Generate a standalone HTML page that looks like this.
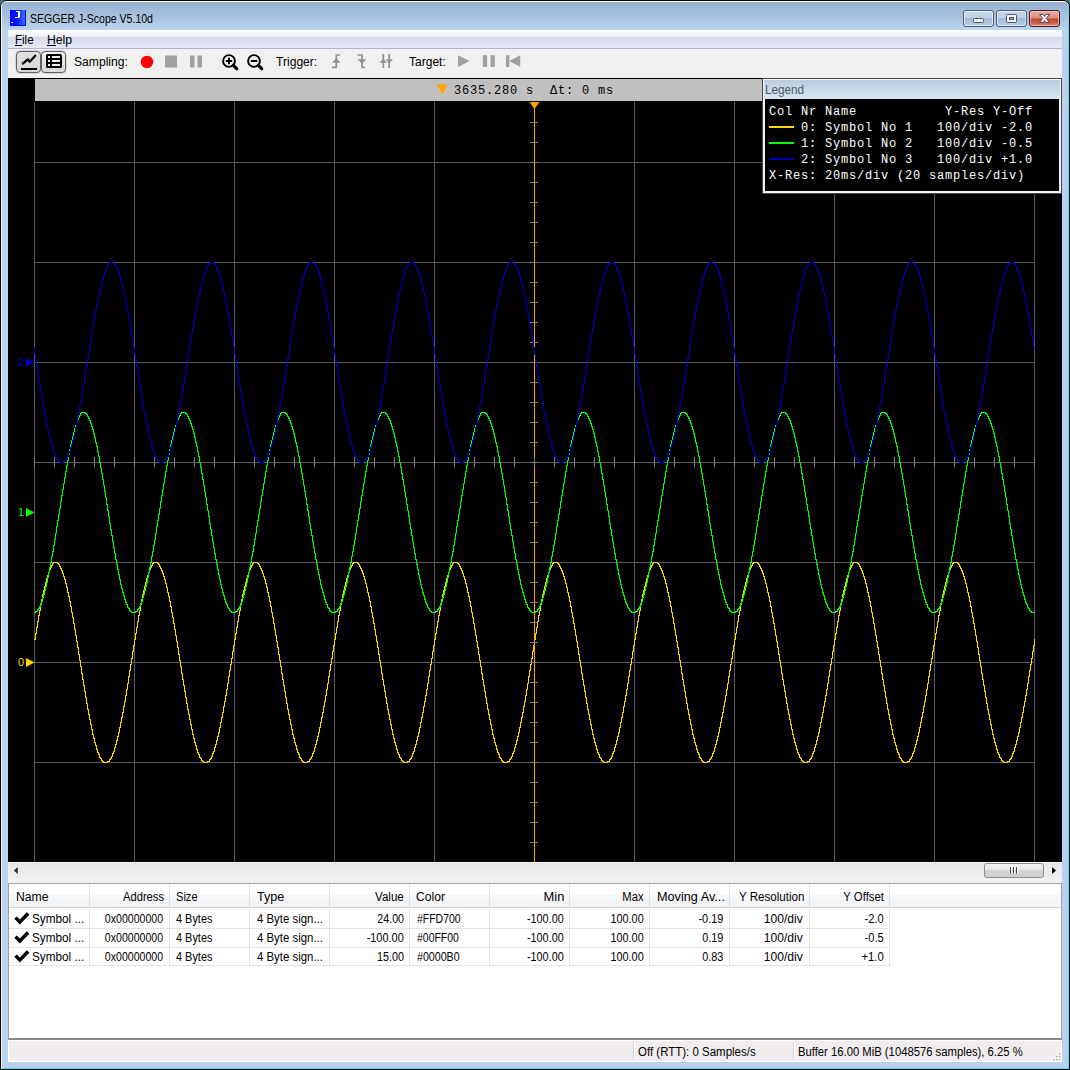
<!DOCTYPE html>
<html><head><meta charset="utf-8"><title>SEGGER J-Scope</title>
<style>
html,body{margin:0;padding:0}
body{width:1070px;height:1070px;position:relative;overflow:hidden;background:#4f6b74;font-family:"Liberation Sans",sans-serif;font-size:12px;color:#000}
div,span,svg{position:absolute;box-sizing:border-box}
.t{white-space:nowrap;line-height:14px;height:14px;transform-origin:0 50%}
.r{transform-origin:100% 50%;text-align:right}
.mono{font-family:"Liberation Mono",monospace}
#win{left:0;top:0;width:1070px;height:1070px;background:#b9d1ea;border-radius:7px 7px 0 0;border:1px solid #000}
#hl{left:1px;top:1px;width:1068px;height:1068px;border-radius:6px 6px 0 0;border-left:1px solid #fff;border-top:1px solid #fff;border-right:1px solid #4fe3ff;border-bottom:1px solid #35dcf5}
#title{left:2px;top:2px;width:1066px;height:28px;border-radius:4px 4px 0 0;background:linear-gradient(#97b3d1 0,#a3bedb 40%,#b3cce7 80%,#bdd6f0 100%)}
.cb{top:10px;height:17px;border:1px solid #4e5b70;border-radius:3px;background:linear-gradient(#c6d7ea 0,#bdd0e6 45%,#a0bad7 50%,#b6cde6 100%);box-shadow:inset 0 0 0 1px rgba(255,255,255,.6)}
#menubar{left:8px;top:30px;width:1054px;height:19px;background:linear-gradient(#ffffff 0,#f7f8fc 18%,#eceef6 38%,#d6daec 39%,#dce0f0 70%,#e4e8f6 100%);border-bottom:1px solid #b0b5c8}
#toolbar{left:8px;top:49px;width:1054px;height:29px;background:#f0f0f0}
.tb{top:51px;height:22px;border:1px solid #606060;border-radius:4px;background:linear-gradient(#f2f2f2,#e2e2e2 50%,#d8d8d8);box-shadow:0 0 0 .5px rgba(96,96,96,.35)}
#plot{left:8px;top:78px;width:1054px;height:784px;background:#000}
#hdr{left:35px;top:79px;width:727px;height:22px;background:#c0c0c0}
#scroll{left:8px;top:862px;width:1054px;height:18px;background:linear-gradient(#ffffff 0,#e5e5e5 7%,#ebebeb 25%,#ededed 85%,#f2f2f2 100%)}
#gap{left:8px;top:880px;width:1054px;height:3px;background:#f0f0f0}
#table{left:8px;top:883px;width:1054px;height:157px;background:#fff;border:1px solid #a0a0a0;border-top-color:#a3a7b2;border-bottom:2px solid #8a8a8a}
#status{left:8px;top:1040px;width:1054px;height:22px;background:#f0edec;border:1px solid #fff}
.hc{top:884px;height:24px;width:80px;background:linear-gradient(#ffffff 0,#ffffff 45%,#f7f8fa 50%,#f1f2f4 100%);border-right:1px solid #e0e3e8;border-bottom:1px solid #d5d5d5}
.vl{width:1px;top:909px;height:57px;background:#e3e3e3}
.hl{left:9px;width:881px;height:1px;background:#e3e3e3}
</style></head><body>
<div id="win"></div><div id="hl"></div>
<div id="title"></div>
<!-- app icon -->
<svg style="left:10px;top:10px" width="16" height="16" viewBox="0 0 16 16"><defs><linearGradient id="ig" x1="0" x2="1" y1="0" y2="0"><stop offset="0" stop-color="#0000f0"/><stop offset=".5" stop-color="#0a20ff"/><stop offset="1" stop-color="#3a80ff"/></linearGradient></defs><rect width="16" height="16" fill="url(#ig)"/><path d="M6 1h4v6l-1 1h-4v-1h3v-5h-2z" fill="#fff"/><path d="M15 0h1v16h-16v-1h15z" fill="#0000ff"/><rect x="1" y="12" width="2" height="1" fill="#fff"/></svg>
<!-- caption buttons -->
<div class="cb" style="left:963px;width:31px"></div>
<div class="cb" style="left:996px;width:31px"></div>
<div class="cb" style="left:1029px;width:31px;border-color:#431422;background:linear-gradient(#e9aa9b 0,#dd8d7c 48%,#c2401f 52%,#c8634b 80%,#d98674 100%);box-shadow:inset 0 0 0 1px rgba(255,220,210,.6)"></div>
<svg style="left:960px;top:8px" width="104" height="22" viewBox="960 8 104 22"><rect x="973.500" y="18.500" width="10" height="4" rx="1" fill="#f4f4f4" stroke="#4b5566" stroke-width="1"/><rect x="1006.500" y="14.500" width="10" height="8" rx="1" fill="#f4f4f4" stroke="#4b5566" stroke-width="1"/><rect x="1009.500" y="17.500" width="4" height="2" fill="#9db8d6" stroke="#4b5566" stroke-width="1"/><path d="M1039.500 14.500h3.600l1.400 1.900l1.400 -1.900h3.600l-3.300 4l3.300 4h-3.600l-1.400 -1.900l-1.400 1.900h-3.600l3.300 -4z" fill="#fff" stroke="#4b4a5e" stroke-width="1" stroke-linejoin="round"/></svg>
<div id="menubar"></div>
<div id="toolbar"></div>
<div class="tb" style="left:16px;width:25px;background:linear-gradient(#e0e0e0,#dcdcdc 50%,#d6d6d6)"></div>
<div class="tb" style="left:41px;width:25px"></div>
<svg style="left:8px;top:49px" width="540" height="29" viewBox="8 49 540 29">
<!-- chart icon -->
<path d="M22.800 63.600l5 -4.300l1.900 2.400l5.600 -6" fill="none" stroke="#000" stroke-width="2.200" stroke-linecap="round" stroke-linejoin="round"/><rect x="21" y="68" width="16" height="2" fill="#000"/>
<!-- list icon -->
<path d="M47.500 54h13q1.500 0 1.500 1.500v11q0 1.500 -1.500 1.500h-13q-1.500 0 -1.500 -1.500v-11q0 -1.500 1.500 -1.500z" fill="#000"/>
<g fill="#f0f0f0"><rect x="48" y="56" width="2" height="2"/><rect x="52" y="56" width="8" height="2"/><rect x="48" y="60" width="2" height="2"/><rect x="52" y="60" width="8" height="2"/><rect x="48" y="64" width="2" height="2"/><rect x="52" y="64" width="8" height="2"/></g>
<!-- sampling -->
<circle cx="147" cy="62" r="6.200" fill="#ff0000"/>
<rect x="165" y="55.500" width="12" height="12" fill="#a0a0a0"/>
<rect x="190" y="55.500" width="4.500" height="12" fill="#a0a0a0"/><rect x="197.500" y="55.500" width="4.500" height="12" fill="#a0a0a0"/>
<!-- zoom in/out -->
<g fill="none" stroke="#000"><circle cx="229" cy="61" r="5.900" stroke-width="1.900"/><path d="M233.300 65.300l3.400 3.400" stroke-width="3.200" stroke-linecap="round"/><path d="M225.800 61h6.400M229 57.800v6.400" stroke-width="2"/>
<circle cx="254" cy="61" r="5.900" stroke-width="1.900"/><path d="M258.300 65.300l3.400 3.400" stroke-width="3.200" stroke-linecap="round"/><path d="M250.800 61h6.400" stroke-width="2"/></g>
<!-- trigger icons -->
<g fill="none" stroke="#909090" stroke-width="1.700"><path d="M332 67.300h4.300v-12.300h3.700"/><path d="M357.500 55h4.500v12.300h3"/><path d="M383.300 54v14M389.200 54v14"/></g>
<g fill="#909090"><path d="M332 62.700l4.300 -4.400l4.300 4.400z"/><path d="M357.700 59.300l4.300 4.400l4.300 -4.400z"/><path d="M379.600 62.700l3.700 -4.200l3.700 4.200z"/><path d="M385.500 59.300l3.700 4.200l3.700 -4.200z"/></g>
<!-- target icons -->
<g fill="#a0a0a0"><path d="M458 55.200l11.600 5.900l-11.600 5.900z"/><rect x="482.800" y="55.200" width="4.300" height="11.800"/><rect x="490.500" y="55.200" width="4.300" height="11.800"/><rect x="506" y="55.200" width="3.300" height="11.800"/><path d="M520.200 55.200l-11 5.900l11 5.900z"/></g>
</svg>
<div id="plot"></div>
<div id="hdr"></div>
<svg style="left:0;top:0" width="1070" height="870" viewBox="0 0 1070 870" shape-rendering="crispEdges">
<g fill="#585858"><rect x="34" y="102" width="1" height="760"/><rect x="134" y="102" width="1" height="760"/><rect x="234" y="102" width="1" height="760"/><rect x="334" y="102" width="1" height="760"/><rect x="434" y="102" width="1" height="760"/><rect x="534" y="102" width="1" height="760"/><rect x="634" y="102" width="1" height="760"/><rect x="734" y="102" width="1" height="760"/><rect x="834" y="102" width="1" height="760"/><rect x="934" y="102" width="1" height="760"/><rect x="1034" y="102" width="1" height="760"/><rect x="34" y="162" width="1001" height="1"/><rect x="34" y="262" width="1001" height="1"/><rect x="34" y="362" width="1001" height="1"/><rect x="34" y="462" width="1001" height="1"/><rect x="34" y="562" width="1001" height="1"/><rect x="34" y="662" width="1001" height="1"/><rect x="34" y="762" width="1001" height="1"/></g>
<path fill="#ffd700" d="M34 639h1v1h-1zM35 633h1v7h-1zM36 627h1v7h-1zM37 621h1v7h-1zM38 615h1v7h-1zM39 610h1v6h-1zM40 604h1v7h-1zM41 599h1v6h-1zM42 594h1v6h-1zM43 590h1v5h-1zM44 586h1v5h-1zM45 582h1v5h-1zM46 578h1v5h-1zM47 575h1v4h-1zM48 572h1v4h-1zM49 569h1v4h-1zM50 567h1v3h-1zM51 565h1v3h-1zM52 563h1v3h-1zM53 562h1v2h-1zM54 562h1v1h-1zM55 562h1v1h-1zM56 562h1v1h-1zM57 562h1v2h-1zM58 563h1v2h-1zM59 564h1v3h-1zM60 566h1v3h-1zM61 568h1v3h-1zM62 570h1v4h-1zM63 573h1v4h-1zM64 576h1v4h-1zM65 579h1v5h-1zM66 583h1v5h-1zM67 587h1v6h-1zM68 592h1v5h-1zM69 596h1v6h-1zM70 601h1v6h-1zM71 606h1v7h-1zM72 612h1v6h-1zM73 617h1v7h-1zM74 623h1v7h-1zM75 629h1v7h-1zM76 635h1v7h-1zM77 641h1v7h-1zM78 647h1v8h-1zM79 654h1v7h-1zM80 660h1v7h-1zM81 666h1v8h-1zM82 673h1v7h-1zM83 679h1v7h-1zM84 685h1v7h-1zM85 691h1v7h-1zM86 697h1v7h-1zM87 703h1v7h-1zM88 709h1v6h-1zM89 714h1v6h-1zM90 719h1v6h-1zM91 724h1v6h-1zM92 729h1v6h-1zM93 734h1v5h-1zM94 738h1v5h-1zM95 742h1v4h-1zM96 745h1v5h-1zM97 749h1v4h-1zM98 752h1v3h-1zM99 754h1v4h-1zM100 757h1v2h-1zM101 758h1v3h-1zM102 760h1v2h-1zM103 761h1v2h-1zM104 762h1v1h-1zM105 762h1v1h-1zM106 762h1v1h-1zM107 761h1v2h-1zM108 761h1v1h-1zM109 759h1v3h-1zM110 758h1v2h-1zM111 756h1v3h-1zM112 753h1v4h-1zM113 751h1v3h-1zM114 747h1v5h-1zM115 744h1v4h-1zM116 740h1v5h-1zM117 736h1v5h-1zM118 732h1v5h-1zM119 727h1v6h-1zM120 722h1v6h-1zM121 717h1v6h-1zM122 712h1v6h-1zM123 706h1v7h-1zM124 701h1v6h-1zM125 695h1v7h-1zM126 689h1v7h-1zM127 683h1v7h-1zM128 676h1v8h-1zM129 670h1v7h-1zM130 664h1v7h-1zM131 658h1v7h-1zM132 651h1v8h-1zM133 645h1v7h-1zM134 639h1v7h-1zM135 633h1v7h-1zM136 627h1v7h-1zM137 621h1v7h-1zM138 615h1v7h-1zM139 610h1v6h-1zM140 604h1v7h-1zM141 599h1v6h-1zM142 594h1v6h-1zM143 590h1v5h-1zM144 586h1v5h-1zM145 582h1v5h-1zM146 578h1v5h-1zM147 575h1v4h-1zM148 572h1v4h-1zM149 569h1v4h-1zM150 567h1v3h-1zM151 565h1v3h-1zM152 563h1v3h-1zM153 562h1v2h-1zM154 562h1v1h-1zM155 562h1v1h-1zM156 562h1v1h-1zM157 562h1v2h-1zM158 563h1v2h-1zM159 564h1v3h-1zM160 566h1v3h-1zM161 568h1v3h-1zM162 570h1v4h-1zM163 573h1v4h-1zM164 576h1v4h-1zM165 579h1v5h-1zM166 583h1v5h-1zM167 587h1v6h-1zM168 592h1v5h-1zM169 596h1v6h-1zM170 601h1v6h-1zM171 606h1v7h-1zM172 612h1v6h-1zM173 617h1v7h-1zM174 623h1v7h-1zM175 629h1v7h-1zM176 635h1v7h-1zM177 641h1v7h-1zM178 647h1v8h-1zM179 654h1v7h-1zM180 660h1v7h-1zM181 666h1v8h-1zM182 673h1v7h-1zM183 679h1v7h-1zM184 685h1v7h-1zM185 691h1v7h-1zM186 697h1v7h-1zM187 703h1v7h-1zM188 709h1v6h-1zM189 714h1v6h-1zM190 719h1v6h-1zM191 724h1v6h-1zM192 729h1v6h-1zM193 734h1v5h-1zM194 738h1v5h-1zM195 742h1v4h-1zM196 745h1v5h-1zM197 749h1v4h-1zM198 752h1v3h-1zM199 754h1v4h-1zM200 757h1v2h-1zM201 758h1v3h-1zM202 760h1v2h-1zM203 761h1v2h-1zM204 762h1v1h-1zM205 762h1v1h-1zM206 762h1v1h-1zM207 761h1v2h-1zM208 761h1v1h-1zM209 759h1v3h-1zM210 758h1v2h-1zM211 756h1v3h-1zM212 753h1v4h-1zM213 751h1v3h-1zM214 747h1v5h-1zM215 744h1v4h-1zM216 740h1v5h-1zM217 736h1v5h-1zM218 732h1v5h-1zM219 727h1v6h-1zM220 722h1v6h-1zM221 717h1v6h-1zM222 712h1v6h-1zM223 706h1v7h-1zM224 701h1v6h-1zM225 695h1v7h-1zM226 689h1v7h-1zM227 683h1v7h-1zM228 676h1v8h-1zM229 670h1v7h-1zM230 664h1v7h-1zM231 658h1v7h-1zM232 651h1v8h-1zM233 645h1v7h-1zM234 639h1v7h-1zM235 633h1v7h-1zM236 627h1v7h-1zM237 621h1v7h-1zM238 615h1v7h-1zM239 610h1v6h-1zM240 604h1v7h-1zM241 599h1v6h-1zM242 594h1v6h-1zM243 590h1v5h-1zM244 586h1v5h-1zM245 582h1v5h-1zM246 578h1v5h-1zM247 575h1v4h-1zM248 572h1v4h-1zM249 569h1v4h-1zM250 567h1v3h-1zM251 565h1v3h-1zM252 563h1v3h-1zM253 562h1v2h-1zM254 562h1v1h-1zM255 562h1v1h-1zM256 562h1v1h-1zM257 562h1v2h-1zM258 563h1v2h-1zM259 564h1v3h-1zM260 566h1v3h-1zM261 568h1v3h-1zM262 570h1v4h-1zM263 573h1v4h-1zM264 576h1v4h-1zM265 579h1v5h-1zM266 583h1v5h-1zM267 587h1v6h-1zM268 592h1v5h-1zM269 596h1v6h-1zM270 601h1v6h-1zM271 606h1v7h-1zM272 612h1v6h-1zM273 617h1v7h-1zM274 623h1v7h-1zM275 629h1v7h-1zM276 635h1v7h-1zM277 641h1v7h-1zM278 647h1v8h-1zM279 654h1v7h-1zM280 660h1v7h-1zM281 666h1v8h-1zM282 673h1v7h-1zM283 679h1v7h-1zM284 685h1v7h-1zM285 691h1v7h-1zM286 697h1v7h-1zM287 703h1v7h-1zM288 709h1v6h-1zM289 714h1v6h-1zM290 719h1v6h-1zM291 724h1v6h-1zM292 729h1v6h-1zM293 734h1v5h-1zM294 738h1v5h-1zM295 742h1v4h-1zM296 745h1v5h-1zM297 749h1v4h-1zM298 752h1v3h-1zM299 754h1v4h-1zM300 757h1v2h-1zM301 758h1v3h-1zM302 760h1v2h-1zM303 761h1v2h-1zM304 762h1v1h-1zM305 762h1v1h-1zM306 762h1v1h-1zM307 761h1v2h-1zM308 761h1v1h-1zM309 759h1v3h-1zM310 758h1v2h-1zM311 756h1v3h-1zM312 753h1v4h-1zM313 751h1v3h-1zM314 747h1v5h-1zM315 744h1v4h-1zM316 740h1v5h-1zM317 736h1v5h-1zM318 732h1v5h-1zM319 727h1v6h-1zM320 722h1v6h-1zM321 717h1v6h-1zM322 712h1v6h-1zM323 706h1v7h-1zM324 701h1v6h-1zM325 695h1v7h-1zM326 689h1v7h-1zM327 683h1v7h-1zM328 676h1v8h-1zM329 670h1v7h-1zM330 664h1v7h-1zM331 658h1v7h-1zM332 651h1v8h-1zM333 645h1v7h-1zM334 639h1v7h-1zM335 633h1v7h-1zM336 627h1v7h-1zM337 621h1v7h-1zM338 615h1v7h-1zM339 610h1v6h-1zM340 604h1v7h-1zM341 599h1v6h-1zM342 594h1v6h-1zM343 590h1v5h-1zM344 586h1v5h-1zM345 582h1v5h-1zM346 578h1v5h-1zM347 575h1v4h-1zM348 572h1v4h-1zM349 569h1v4h-1zM350 567h1v3h-1zM351 565h1v3h-1zM352 563h1v3h-1zM353 562h1v2h-1zM354 562h1v1h-1zM355 562h1v1h-1zM356 562h1v1h-1zM357 562h1v2h-1zM358 563h1v2h-1zM359 564h1v3h-1zM360 566h1v3h-1zM361 568h1v3h-1zM362 570h1v4h-1zM363 573h1v4h-1zM364 576h1v4h-1zM365 579h1v5h-1zM366 583h1v5h-1zM367 587h1v6h-1zM368 592h1v5h-1zM369 596h1v6h-1zM370 601h1v6h-1zM371 606h1v7h-1zM372 612h1v6h-1zM373 617h1v7h-1zM374 623h1v7h-1zM375 629h1v7h-1zM376 635h1v7h-1zM377 641h1v7h-1zM378 647h1v8h-1zM379 654h1v7h-1zM380 660h1v7h-1zM381 666h1v8h-1zM382 673h1v7h-1zM383 679h1v7h-1zM384 685h1v7h-1zM385 691h1v7h-1zM386 697h1v7h-1zM387 703h1v7h-1zM388 709h1v6h-1zM389 714h1v6h-1zM390 719h1v6h-1zM391 724h1v6h-1zM392 729h1v6h-1zM393 734h1v5h-1zM394 738h1v5h-1zM395 742h1v4h-1zM396 745h1v5h-1zM397 749h1v4h-1zM398 752h1v3h-1zM399 754h1v4h-1zM400 757h1v2h-1zM401 758h1v3h-1zM402 760h1v2h-1zM403 761h1v2h-1zM404 762h1v1h-1zM405 762h1v1h-1zM406 762h1v1h-1zM407 761h1v2h-1zM408 761h1v1h-1zM409 759h1v3h-1zM410 758h1v2h-1zM411 756h1v3h-1zM412 753h1v4h-1zM413 751h1v3h-1zM414 747h1v5h-1zM415 744h1v4h-1zM416 740h1v5h-1zM417 736h1v5h-1zM418 732h1v5h-1zM419 727h1v6h-1zM420 722h1v6h-1zM421 717h1v6h-1zM422 712h1v6h-1zM423 706h1v7h-1zM424 701h1v6h-1zM425 695h1v7h-1zM426 689h1v7h-1zM427 683h1v7h-1zM428 676h1v8h-1zM429 670h1v7h-1zM430 664h1v7h-1zM431 658h1v7h-1zM432 651h1v8h-1zM433 645h1v7h-1zM434 639h1v7h-1zM435 633h1v7h-1zM436 627h1v7h-1zM437 621h1v7h-1zM438 615h1v7h-1zM439 610h1v6h-1zM440 604h1v7h-1zM441 599h1v6h-1zM442 594h1v6h-1zM443 590h1v5h-1zM444 586h1v5h-1zM445 582h1v5h-1zM446 578h1v5h-1zM447 575h1v4h-1zM448 572h1v4h-1zM449 569h1v4h-1zM450 567h1v3h-1zM451 565h1v3h-1zM452 563h1v3h-1zM453 562h1v2h-1zM454 562h1v1h-1zM455 562h1v1h-1zM456 562h1v1h-1zM457 562h1v2h-1zM458 563h1v2h-1zM459 564h1v3h-1zM460 566h1v3h-1zM461 568h1v3h-1zM462 570h1v4h-1zM463 573h1v4h-1zM464 576h1v4h-1zM465 579h1v5h-1zM466 583h1v5h-1zM467 587h1v6h-1zM468 592h1v5h-1zM469 596h1v6h-1zM470 601h1v6h-1zM471 606h1v7h-1zM472 612h1v6h-1zM473 617h1v7h-1zM474 623h1v7h-1zM475 629h1v7h-1zM476 635h1v7h-1zM477 641h1v7h-1zM478 647h1v8h-1zM479 654h1v7h-1zM480 660h1v7h-1zM481 666h1v8h-1zM482 673h1v7h-1zM483 679h1v7h-1zM484 685h1v7h-1zM485 691h1v7h-1zM486 697h1v7h-1zM487 703h1v7h-1zM488 709h1v6h-1zM489 714h1v6h-1zM490 719h1v6h-1zM491 724h1v6h-1zM492 729h1v6h-1zM493 734h1v5h-1zM494 738h1v5h-1zM495 742h1v4h-1zM496 745h1v5h-1zM497 749h1v4h-1zM498 752h1v3h-1zM499 754h1v4h-1zM500 757h1v2h-1zM501 758h1v3h-1zM502 760h1v2h-1zM503 761h1v2h-1zM504 762h1v1h-1zM505 762h1v1h-1zM506 762h1v1h-1zM507 761h1v2h-1zM508 761h1v1h-1zM509 759h1v3h-1zM510 758h1v2h-1zM511 756h1v3h-1zM512 753h1v4h-1zM513 751h1v3h-1zM514 747h1v5h-1zM515 744h1v4h-1zM516 740h1v5h-1zM517 736h1v5h-1zM518 732h1v5h-1zM519 727h1v6h-1zM520 722h1v6h-1zM521 717h1v6h-1zM522 712h1v6h-1zM523 706h1v7h-1zM524 701h1v6h-1zM525 695h1v7h-1zM526 689h1v7h-1zM527 683h1v7h-1zM528 676h1v8h-1zM529 670h1v7h-1zM530 664h1v7h-1zM531 658h1v7h-1zM532 651h1v8h-1zM533 645h1v7h-1zM534 639h1v7h-1zM535 633h1v7h-1zM536 627h1v7h-1zM537 621h1v7h-1zM538 615h1v7h-1zM539 610h1v6h-1zM540 604h1v7h-1zM541 599h1v6h-1zM542 594h1v6h-1zM543 590h1v5h-1zM544 586h1v5h-1zM545 582h1v5h-1zM546 578h1v5h-1zM547 575h1v4h-1zM548 572h1v4h-1zM549 569h1v4h-1zM550 567h1v3h-1zM551 565h1v3h-1zM552 563h1v3h-1zM553 562h1v2h-1zM554 562h1v1h-1zM555 562h1v1h-1zM556 562h1v1h-1zM557 562h1v2h-1zM558 563h1v2h-1zM559 564h1v3h-1zM560 566h1v3h-1zM561 568h1v3h-1zM562 570h1v4h-1zM563 573h1v4h-1zM564 576h1v4h-1zM565 579h1v5h-1zM566 583h1v5h-1zM567 587h1v6h-1zM568 592h1v5h-1zM569 596h1v6h-1zM570 601h1v6h-1zM571 606h1v7h-1zM572 612h1v6h-1zM573 617h1v7h-1zM574 623h1v7h-1zM575 629h1v7h-1zM576 635h1v7h-1zM577 641h1v7h-1zM578 647h1v8h-1zM579 654h1v7h-1zM580 660h1v7h-1zM581 666h1v8h-1zM582 673h1v7h-1zM583 679h1v7h-1zM584 685h1v7h-1zM585 691h1v7h-1zM586 697h1v7h-1zM587 703h1v7h-1zM588 709h1v6h-1zM589 714h1v6h-1zM590 719h1v6h-1zM591 724h1v6h-1zM592 729h1v6h-1zM593 734h1v5h-1zM594 738h1v5h-1zM595 742h1v4h-1zM596 745h1v5h-1zM597 749h1v4h-1zM598 752h1v3h-1zM599 754h1v4h-1zM600 757h1v2h-1zM601 758h1v3h-1zM602 760h1v2h-1zM603 761h1v2h-1zM604 762h1v1h-1zM605 762h1v1h-1zM606 762h1v1h-1zM607 761h1v2h-1zM608 761h1v1h-1zM609 759h1v3h-1zM610 758h1v2h-1zM611 756h1v3h-1zM612 753h1v4h-1zM613 751h1v3h-1zM614 747h1v5h-1zM615 744h1v4h-1zM616 740h1v5h-1zM617 736h1v5h-1zM618 732h1v5h-1zM619 727h1v6h-1zM620 722h1v6h-1zM621 717h1v6h-1zM622 712h1v6h-1zM623 706h1v7h-1zM624 701h1v6h-1zM625 695h1v7h-1zM626 689h1v7h-1zM627 683h1v7h-1zM628 676h1v8h-1zM629 670h1v7h-1zM630 664h1v7h-1zM631 658h1v7h-1zM632 651h1v8h-1zM633 645h1v7h-1zM634 639h1v7h-1zM635 633h1v7h-1zM636 627h1v7h-1zM637 621h1v7h-1zM638 615h1v7h-1zM639 610h1v6h-1zM640 604h1v7h-1zM641 599h1v6h-1zM642 594h1v6h-1zM643 590h1v5h-1zM644 586h1v5h-1zM645 582h1v5h-1zM646 578h1v5h-1zM647 575h1v4h-1zM648 572h1v4h-1zM649 569h1v4h-1zM650 567h1v3h-1zM651 565h1v3h-1zM652 563h1v3h-1zM653 562h1v2h-1zM654 562h1v1h-1zM655 562h1v1h-1zM656 562h1v1h-1zM657 562h1v2h-1zM658 563h1v2h-1zM659 564h1v3h-1zM660 566h1v3h-1zM661 568h1v3h-1zM662 570h1v4h-1zM663 573h1v4h-1zM664 576h1v4h-1zM665 579h1v5h-1zM666 583h1v5h-1zM667 587h1v6h-1zM668 592h1v5h-1zM669 596h1v6h-1zM670 601h1v6h-1zM671 606h1v7h-1zM672 612h1v6h-1zM673 617h1v7h-1zM674 623h1v7h-1zM675 629h1v7h-1zM676 635h1v7h-1zM677 641h1v7h-1zM678 647h1v8h-1zM679 654h1v7h-1zM680 660h1v7h-1zM681 666h1v8h-1zM682 673h1v7h-1zM683 679h1v7h-1zM684 685h1v7h-1zM685 691h1v7h-1zM686 697h1v7h-1zM687 703h1v7h-1zM688 709h1v6h-1zM689 714h1v6h-1zM690 719h1v6h-1zM691 724h1v6h-1zM692 729h1v6h-1zM693 734h1v5h-1zM694 738h1v5h-1zM695 742h1v4h-1zM696 745h1v5h-1zM697 749h1v4h-1zM698 752h1v3h-1zM699 754h1v4h-1zM700 757h1v2h-1zM701 758h1v3h-1zM702 760h1v2h-1zM703 761h1v2h-1zM704 762h1v1h-1zM705 762h1v1h-1zM706 762h1v1h-1zM707 761h1v2h-1zM708 761h1v1h-1zM709 759h1v3h-1zM710 758h1v2h-1zM711 756h1v3h-1zM712 753h1v4h-1zM713 751h1v3h-1zM714 747h1v5h-1zM715 744h1v4h-1zM716 740h1v5h-1zM717 736h1v5h-1zM718 732h1v5h-1zM719 727h1v6h-1zM720 722h1v6h-1zM721 717h1v6h-1zM722 712h1v6h-1zM723 706h1v7h-1zM724 701h1v6h-1zM725 695h1v7h-1zM726 689h1v7h-1zM727 683h1v7h-1zM728 676h1v8h-1zM729 670h1v7h-1zM730 664h1v7h-1zM731 658h1v7h-1zM732 651h1v8h-1zM733 645h1v7h-1zM734 639h1v7h-1zM735 633h1v7h-1zM736 627h1v7h-1zM737 621h1v7h-1zM738 615h1v7h-1zM739 610h1v6h-1zM740 604h1v7h-1zM741 599h1v6h-1zM742 594h1v6h-1zM743 590h1v5h-1zM744 586h1v5h-1zM745 582h1v5h-1zM746 578h1v5h-1zM747 575h1v4h-1zM748 572h1v4h-1zM749 569h1v4h-1zM750 567h1v3h-1zM751 565h1v3h-1zM752 563h1v3h-1zM753 562h1v2h-1zM754 562h1v1h-1zM755 562h1v1h-1zM756 562h1v1h-1zM757 562h1v2h-1zM758 563h1v2h-1zM759 564h1v3h-1zM760 566h1v3h-1zM761 568h1v3h-1zM762 570h1v4h-1zM763 573h1v4h-1zM764 576h1v4h-1zM765 579h1v5h-1zM766 583h1v5h-1zM767 587h1v6h-1zM768 592h1v5h-1zM769 596h1v6h-1zM770 601h1v6h-1zM771 606h1v7h-1zM772 612h1v6h-1zM773 617h1v7h-1zM774 623h1v7h-1zM775 629h1v7h-1zM776 635h1v7h-1zM777 641h1v7h-1zM778 647h1v8h-1zM779 654h1v7h-1zM780 660h1v7h-1zM781 666h1v8h-1zM782 673h1v7h-1zM783 679h1v7h-1zM784 685h1v7h-1zM785 691h1v7h-1zM786 697h1v7h-1zM787 703h1v7h-1zM788 709h1v6h-1zM789 714h1v6h-1zM790 719h1v6h-1zM791 724h1v6h-1zM792 729h1v6h-1zM793 734h1v5h-1zM794 738h1v5h-1zM795 742h1v4h-1zM796 745h1v5h-1zM797 749h1v4h-1zM798 752h1v3h-1zM799 754h1v4h-1zM800 757h1v2h-1zM801 758h1v3h-1zM802 760h1v2h-1zM803 761h1v2h-1zM804 762h1v1h-1zM805 762h1v1h-1zM806 762h1v1h-1zM807 761h1v2h-1zM808 761h1v1h-1zM809 759h1v3h-1zM810 758h1v2h-1zM811 756h1v3h-1zM812 753h1v4h-1zM813 751h1v3h-1zM814 747h1v5h-1zM815 744h1v4h-1zM816 740h1v5h-1zM817 736h1v5h-1zM818 732h1v5h-1zM819 727h1v6h-1zM820 722h1v6h-1zM821 717h1v6h-1zM822 712h1v6h-1zM823 706h1v7h-1zM824 701h1v6h-1zM825 695h1v7h-1zM826 689h1v7h-1zM827 683h1v7h-1zM828 676h1v8h-1zM829 670h1v7h-1zM830 664h1v7h-1zM831 658h1v7h-1zM832 651h1v8h-1zM833 645h1v7h-1zM834 639h1v7h-1zM835 633h1v7h-1zM836 627h1v7h-1zM837 621h1v7h-1zM838 615h1v7h-1zM839 610h1v6h-1zM840 604h1v7h-1zM841 599h1v6h-1zM842 594h1v6h-1zM843 590h1v5h-1zM844 586h1v5h-1zM845 582h1v5h-1zM846 578h1v5h-1zM847 575h1v4h-1zM848 572h1v4h-1zM849 569h1v4h-1zM850 567h1v3h-1zM851 565h1v3h-1zM852 563h1v3h-1zM853 562h1v2h-1zM854 562h1v1h-1zM855 562h1v1h-1zM856 562h1v1h-1zM857 562h1v2h-1zM858 563h1v2h-1zM859 564h1v3h-1zM860 566h1v3h-1zM861 568h1v3h-1zM862 570h1v4h-1zM863 573h1v4h-1zM864 576h1v4h-1zM865 579h1v5h-1zM866 583h1v5h-1zM867 587h1v6h-1zM868 592h1v5h-1zM869 596h1v6h-1zM870 601h1v6h-1zM871 606h1v7h-1zM872 612h1v6h-1zM873 617h1v7h-1zM874 623h1v7h-1zM875 629h1v7h-1zM876 635h1v7h-1zM877 641h1v7h-1zM878 647h1v8h-1zM879 654h1v7h-1zM880 660h1v7h-1zM881 666h1v8h-1zM882 673h1v7h-1zM883 679h1v7h-1zM884 685h1v7h-1zM885 691h1v7h-1zM886 697h1v7h-1zM887 703h1v7h-1zM888 709h1v6h-1zM889 714h1v6h-1zM890 719h1v6h-1zM891 724h1v6h-1zM892 729h1v6h-1zM893 734h1v5h-1zM894 738h1v5h-1zM895 742h1v4h-1zM896 745h1v5h-1zM897 749h1v4h-1zM898 752h1v3h-1zM899 754h1v4h-1zM900 757h1v2h-1zM901 758h1v3h-1zM902 760h1v2h-1zM903 761h1v2h-1zM904 762h1v1h-1zM905 762h1v1h-1zM906 762h1v1h-1zM907 761h1v2h-1zM908 761h1v1h-1zM909 759h1v3h-1zM910 758h1v2h-1zM911 756h1v3h-1zM912 753h1v4h-1zM913 751h1v3h-1zM914 747h1v5h-1zM915 744h1v4h-1zM916 740h1v5h-1zM917 736h1v5h-1zM918 732h1v5h-1zM919 727h1v6h-1zM920 722h1v6h-1zM921 717h1v6h-1zM922 712h1v6h-1zM923 706h1v7h-1zM924 701h1v6h-1zM925 695h1v7h-1zM926 689h1v7h-1zM927 683h1v7h-1zM928 676h1v8h-1zM929 670h1v7h-1zM930 664h1v7h-1zM931 658h1v7h-1zM932 651h1v8h-1zM933 645h1v7h-1zM934 639h1v7h-1zM935 633h1v7h-1zM936 627h1v7h-1zM937 621h1v7h-1zM938 615h1v7h-1zM939 610h1v6h-1zM940 604h1v7h-1zM941 599h1v6h-1zM942 594h1v6h-1zM943 590h1v5h-1zM944 586h1v5h-1zM945 582h1v5h-1zM946 578h1v5h-1zM947 575h1v4h-1zM948 572h1v4h-1zM949 569h1v4h-1zM950 567h1v3h-1zM951 565h1v3h-1zM952 563h1v3h-1zM953 562h1v2h-1zM954 562h1v1h-1zM955 562h1v1h-1zM956 562h1v1h-1zM957 562h1v2h-1zM958 563h1v2h-1zM959 564h1v3h-1zM960 566h1v3h-1zM961 568h1v3h-1zM962 570h1v4h-1zM963 573h1v4h-1zM964 576h1v4h-1zM965 579h1v5h-1zM966 583h1v5h-1zM967 587h1v6h-1zM968 592h1v5h-1zM969 596h1v6h-1zM970 601h1v6h-1zM971 606h1v7h-1zM972 612h1v6h-1zM973 617h1v7h-1zM974 623h1v7h-1zM975 629h1v7h-1zM976 635h1v7h-1zM977 641h1v7h-1zM978 647h1v8h-1zM979 654h1v7h-1zM980 660h1v7h-1zM981 666h1v8h-1zM982 673h1v7h-1zM983 679h1v7h-1zM984 685h1v7h-1zM985 691h1v7h-1zM986 697h1v7h-1zM987 703h1v7h-1zM988 709h1v6h-1zM989 714h1v6h-1zM990 719h1v6h-1zM991 724h1v6h-1zM992 729h1v6h-1zM993 734h1v5h-1zM994 738h1v5h-1zM995 742h1v4h-1zM996 745h1v5h-1zM997 749h1v4h-1zM998 752h1v3h-1zM999 754h1v4h-1zM1000 757h1v2h-1zM1001 758h1v3h-1zM1002 760h1v2h-1zM1003 761h1v2h-1zM1004 762h1v1h-1zM1005 762h1v1h-1zM1006 762h1v1h-1zM1007 761h1v2h-1zM1008 761h1v1h-1zM1009 759h1v3h-1zM1010 758h1v2h-1zM1011 756h1v3h-1zM1012 753h1v4h-1zM1013 751h1v3h-1zM1014 747h1v5h-1zM1015 744h1v4h-1zM1016 740h1v5h-1zM1017 736h1v5h-1zM1018 732h1v5h-1zM1019 727h1v6h-1zM1020 722h1v6h-1zM1021 717h1v6h-1zM1022 712h1v6h-1zM1023 706h1v7h-1zM1024 701h1v6h-1zM1025 695h1v7h-1zM1026 689h1v7h-1zM1027 683h1v7h-1zM1028 676h1v8h-1zM1029 670h1v7h-1zM1030 664h1v7h-1zM1031 658h1v7h-1zM1032 651h1v8h-1zM1033 645h1v7h-1zM1034 639h1v7h-1z"/>
<path fill="#00ff00" d="M34 612h1v1h-1zM35 611h1v2h-1zM36 611h1v1h-1zM37 609h1v3h-1zM38 608h1v2h-1zM39 606h1v3h-1zM40 603h1v4h-1zM41 601h1v3h-1zM42 597h1v5h-1zM43 594h1v4h-1zM44 590h1v5h-1zM45 586h1v5h-1zM46 582h1v5h-1zM47 577h1v6h-1zM48 572h1v6h-1zM49 567h1v6h-1zM50 562h1v6h-1zM51 556h1v7h-1zM52 551h1v6h-1zM53 545h1v7h-1zM54 539h1v7h-1zM55 533h1v7h-1zM56 526h1v8h-1zM57 520h1v7h-1zM58 514h1v7h-1zM59 508h1v7h-1zM60 501h1v8h-1zM61 495h1v7h-1zM62 489h1v7h-1zM63 483h1v7h-1zM64 477h1v7h-1zM65 471h1v7h-1zM66 465h1v7h-1zM67 460h1v6h-1zM68 454h1v7h-1zM69 449h1v6h-1zM70 444h1v6h-1zM71 440h1v5h-1zM72 436h1v5h-1zM73 432h1v5h-1zM74 428h1v5h-1zM75 425h1v4h-1zM76 422h1v4h-1zM77 419h1v4h-1zM78 417h1v3h-1zM79 415h1v3h-1zM80 413h1v3h-1zM81 412h1v2h-1zM82 412h1v1h-1zM83 412h1v1h-1zM84 412h1v1h-1zM85 412h1v2h-1zM86 413h1v2h-1zM87 414h1v3h-1zM88 416h1v3h-1zM89 418h1v3h-1zM90 420h1v4h-1zM91 423h1v4h-1zM92 426h1v4h-1zM93 429h1v5h-1zM94 433h1v5h-1zM95 437h1v6h-1zM96 442h1v5h-1zM97 446h1v6h-1zM98 451h1v6h-1zM99 456h1v7h-1zM100 462h1v6h-1zM101 467h1v7h-1zM102 473h1v7h-1zM103 479h1v7h-1zM104 485h1v7h-1zM105 491h1v7h-1zM106 497h1v8h-1zM107 504h1v7h-1zM108 510h1v7h-1zM109 516h1v8h-1zM110 523h1v7h-1zM111 529h1v7h-1zM112 535h1v7h-1zM113 541h1v7h-1zM114 547h1v7h-1zM115 553h1v7h-1zM116 559h1v6h-1zM117 564h1v6h-1zM118 569h1v6h-1zM119 574h1v6h-1zM120 579h1v6h-1zM121 584h1v5h-1zM122 588h1v5h-1zM123 592h1v4h-1zM124 595h1v5h-1zM125 599h1v4h-1zM126 602h1v3h-1zM127 604h1v4h-1zM128 607h1v2h-1zM129 608h1v3h-1zM130 610h1v2h-1zM131 611h1v2h-1zM132 612h1v1h-1zM133 612h1v1h-1zM134 612h1v1h-1zM135 611h1v2h-1zM136 611h1v1h-1zM137 609h1v3h-1zM138 608h1v2h-1zM139 606h1v3h-1zM140 603h1v4h-1zM141 601h1v3h-1zM142 597h1v5h-1zM143 594h1v4h-1zM144 590h1v5h-1zM145 586h1v5h-1zM146 582h1v5h-1zM147 577h1v6h-1zM148 572h1v6h-1zM149 567h1v6h-1zM150 562h1v6h-1zM151 556h1v7h-1zM152 551h1v6h-1zM153 545h1v7h-1zM154 539h1v7h-1zM155 533h1v7h-1zM156 526h1v8h-1zM157 520h1v7h-1zM158 514h1v7h-1zM159 508h1v7h-1zM160 501h1v8h-1zM161 495h1v7h-1zM162 489h1v7h-1zM163 483h1v7h-1zM164 477h1v7h-1zM165 471h1v7h-1zM166 465h1v7h-1zM167 460h1v6h-1zM168 454h1v7h-1zM169 449h1v6h-1zM170 444h1v6h-1zM171 440h1v5h-1zM172 436h1v5h-1zM173 432h1v5h-1zM174 428h1v5h-1zM175 425h1v4h-1zM176 422h1v4h-1zM177 419h1v4h-1zM178 417h1v3h-1zM179 415h1v3h-1zM180 413h1v3h-1zM181 412h1v2h-1zM182 412h1v1h-1zM183 412h1v1h-1zM184 412h1v1h-1zM185 412h1v2h-1zM186 413h1v2h-1zM187 414h1v3h-1zM188 416h1v3h-1zM189 418h1v3h-1zM190 420h1v4h-1zM191 423h1v4h-1zM192 426h1v4h-1zM193 429h1v5h-1zM194 433h1v5h-1zM195 437h1v6h-1zM196 442h1v5h-1zM197 446h1v6h-1zM198 451h1v6h-1zM199 456h1v7h-1zM200 462h1v6h-1zM201 467h1v7h-1zM202 473h1v7h-1zM203 479h1v7h-1zM204 485h1v7h-1zM205 491h1v7h-1zM206 497h1v8h-1zM207 504h1v7h-1zM208 510h1v7h-1zM209 516h1v8h-1zM210 523h1v7h-1zM211 529h1v7h-1zM212 535h1v7h-1zM213 541h1v7h-1zM214 547h1v7h-1zM215 553h1v7h-1zM216 559h1v6h-1zM217 564h1v6h-1zM218 569h1v6h-1zM219 574h1v6h-1zM220 579h1v6h-1zM221 584h1v5h-1zM222 588h1v5h-1zM223 592h1v4h-1zM224 595h1v5h-1zM225 599h1v4h-1zM226 602h1v3h-1zM227 604h1v4h-1zM228 607h1v2h-1zM229 608h1v3h-1zM230 610h1v2h-1zM231 611h1v2h-1zM232 612h1v1h-1zM233 612h1v1h-1zM234 612h1v1h-1zM235 611h1v2h-1zM236 611h1v1h-1zM237 609h1v3h-1zM238 608h1v2h-1zM239 606h1v3h-1zM240 603h1v4h-1zM241 601h1v3h-1zM242 597h1v5h-1zM243 594h1v4h-1zM244 590h1v5h-1zM245 586h1v5h-1zM246 582h1v5h-1zM247 577h1v6h-1zM248 572h1v6h-1zM249 567h1v6h-1zM250 562h1v6h-1zM251 556h1v7h-1zM252 551h1v6h-1zM253 545h1v7h-1zM254 539h1v7h-1zM255 533h1v7h-1zM256 526h1v8h-1zM257 520h1v7h-1zM258 514h1v7h-1zM259 508h1v7h-1zM260 501h1v8h-1zM261 495h1v7h-1zM262 489h1v7h-1zM263 483h1v7h-1zM264 477h1v7h-1zM265 471h1v7h-1zM266 465h1v7h-1zM267 460h1v6h-1zM268 454h1v7h-1zM269 449h1v6h-1zM270 444h1v6h-1zM271 440h1v5h-1zM272 436h1v5h-1zM273 432h1v5h-1zM274 428h1v5h-1zM275 425h1v4h-1zM276 422h1v4h-1zM277 419h1v4h-1zM278 417h1v3h-1zM279 415h1v3h-1zM280 413h1v3h-1zM281 412h1v2h-1zM282 412h1v1h-1zM283 412h1v1h-1zM284 412h1v1h-1zM285 412h1v2h-1zM286 413h1v2h-1zM287 414h1v3h-1zM288 416h1v3h-1zM289 418h1v3h-1zM290 420h1v4h-1zM291 423h1v4h-1zM292 426h1v4h-1zM293 429h1v5h-1zM294 433h1v5h-1zM295 437h1v6h-1zM296 442h1v5h-1zM297 446h1v6h-1zM298 451h1v6h-1zM299 456h1v7h-1zM300 462h1v6h-1zM301 467h1v7h-1zM302 473h1v7h-1zM303 479h1v7h-1zM304 485h1v7h-1zM305 491h1v7h-1zM306 497h1v8h-1zM307 504h1v7h-1zM308 510h1v7h-1zM309 516h1v8h-1zM310 523h1v7h-1zM311 529h1v7h-1zM312 535h1v7h-1zM313 541h1v7h-1zM314 547h1v7h-1zM315 553h1v7h-1zM316 559h1v6h-1zM317 564h1v6h-1zM318 569h1v6h-1zM319 574h1v6h-1zM320 579h1v6h-1zM321 584h1v5h-1zM322 588h1v5h-1zM323 592h1v4h-1zM324 595h1v5h-1zM325 599h1v4h-1zM326 602h1v3h-1zM327 604h1v4h-1zM328 607h1v2h-1zM329 608h1v3h-1zM330 610h1v2h-1zM331 611h1v2h-1zM332 612h1v1h-1zM333 612h1v1h-1zM334 612h1v1h-1zM335 611h1v2h-1zM336 611h1v1h-1zM337 609h1v3h-1zM338 608h1v2h-1zM339 606h1v3h-1zM340 603h1v4h-1zM341 601h1v3h-1zM342 597h1v5h-1zM343 594h1v4h-1zM344 590h1v5h-1zM345 586h1v5h-1zM346 582h1v5h-1zM347 577h1v6h-1zM348 572h1v6h-1zM349 567h1v6h-1zM350 562h1v6h-1zM351 556h1v7h-1zM352 551h1v6h-1zM353 545h1v7h-1zM354 539h1v7h-1zM355 533h1v7h-1zM356 526h1v8h-1zM357 520h1v7h-1zM358 514h1v7h-1zM359 508h1v7h-1zM360 501h1v8h-1zM361 495h1v7h-1zM362 489h1v7h-1zM363 483h1v7h-1zM364 477h1v7h-1zM365 471h1v7h-1zM366 465h1v7h-1zM367 460h1v6h-1zM368 454h1v7h-1zM369 449h1v6h-1zM370 444h1v6h-1zM371 440h1v5h-1zM372 436h1v5h-1zM373 432h1v5h-1zM374 428h1v5h-1zM375 425h1v4h-1zM376 422h1v4h-1zM377 419h1v4h-1zM378 417h1v3h-1zM379 415h1v3h-1zM380 413h1v3h-1zM381 412h1v2h-1zM382 412h1v1h-1zM383 412h1v1h-1zM384 412h1v1h-1zM385 412h1v2h-1zM386 413h1v2h-1zM387 414h1v3h-1zM388 416h1v3h-1zM389 418h1v3h-1zM390 420h1v4h-1zM391 423h1v4h-1zM392 426h1v4h-1zM393 429h1v5h-1zM394 433h1v5h-1zM395 437h1v6h-1zM396 442h1v5h-1zM397 446h1v6h-1zM398 451h1v6h-1zM399 456h1v7h-1zM400 462h1v6h-1zM401 467h1v7h-1zM402 473h1v7h-1zM403 479h1v7h-1zM404 485h1v7h-1zM405 491h1v7h-1zM406 497h1v8h-1zM407 504h1v7h-1zM408 510h1v7h-1zM409 516h1v8h-1zM410 523h1v7h-1zM411 529h1v7h-1zM412 535h1v7h-1zM413 541h1v7h-1zM414 547h1v7h-1zM415 553h1v7h-1zM416 559h1v6h-1zM417 564h1v6h-1zM418 569h1v6h-1zM419 574h1v6h-1zM420 579h1v6h-1zM421 584h1v5h-1zM422 588h1v5h-1zM423 592h1v4h-1zM424 595h1v5h-1zM425 599h1v4h-1zM426 602h1v3h-1zM427 604h1v4h-1zM428 607h1v2h-1zM429 608h1v3h-1zM430 610h1v2h-1zM431 611h1v2h-1zM432 612h1v1h-1zM433 612h1v1h-1zM434 612h1v1h-1zM435 611h1v2h-1zM436 611h1v1h-1zM437 609h1v3h-1zM438 608h1v2h-1zM439 606h1v3h-1zM440 603h1v4h-1zM441 601h1v3h-1zM442 597h1v5h-1zM443 594h1v4h-1zM444 590h1v5h-1zM445 586h1v5h-1zM446 582h1v5h-1zM447 577h1v6h-1zM448 572h1v6h-1zM449 567h1v6h-1zM450 562h1v6h-1zM451 556h1v7h-1zM452 551h1v6h-1zM453 545h1v7h-1zM454 539h1v7h-1zM455 533h1v7h-1zM456 526h1v8h-1zM457 520h1v7h-1zM458 514h1v7h-1zM459 508h1v7h-1zM460 501h1v8h-1zM461 495h1v7h-1zM462 489h1v7h-1zM463 483h1v7h-1zM464 477h1v7h-1zM465 471h1v7h-1zM466 465h1v7h-1zM467 460h1v6h-1zM468 454h1v7h-1zM469 449h1v6h-1zM470 444h1v6h-1zM471 440h1v5h-1zM472 436h1v5h-1zM473 432h1v5h-1zM474 428h1v5h-1zM475 425h1v4h-1zM476 422h1v4h-1zM477 419h1v4h-1zM478 417h1v3h-1zM479 415h1v3h-1zM480 413h1v3h-1zM481 412h1v2h-1zM482 412h1v1h-1zM483 412h1v1h-1zM484 412h1v1h-1zM485 412h1v2h-1zM486 413h1v2h-1zM487 414h1v3h-1zM488 416h1v3h-1zM489 418h1v3h-1zM490 420h1v4h-1zM491 423h1v4h-1zM492 426h1v4h-1zM493 429h1v5h-1zM494 433h1v5h-1zM495 437h1v6h-1zM496 442h1v5h-1zM497 446h1v6h-1zM498 451h1v6h-1zM499 456h1v7h-1zM500 462h1v6h-1zM501 467h1v7h-1zM502 473h1v7h-1zM503 479h1v7h-1zM504 485h1v7h-1zM505 491h1v7h-1zM506 497h1v8h-1zM507 504h1v7h-1zM508 510h1v7h-1zM509 516h1v8h-1zM510 523h1v7h-1zM511 529h1v7h-1zM512 535h1v7h-1zM513 541h1v7h-1zM514 547h1v7h-1zM515 553h1v7h-1zM516 559h1v6h-1zM517 564h1v6h-1zM518 569h1v6h-1zM519 574h1v6h-1zM520 579h1v6h-1zM521 584h1v5h-1zM522 588h1v5h-1zM523 592h1v4h-1zM524 595h1v5h-1zM525 599h1v4h-1zM526 602h1v3h-1zM527 604h1v4h-1zM528 607h1v2h-1zM529 608h1v3h-1zM530 610h1v2h-1zM531 611h1v2h-1zM532 612h1v1h-1zM533 612h1v1h-1zM534 612h1v1h-1zM535 611h1v2h-1zM536 611h1v1h-1zM537 609h1v3h-1zM538 608h1v2h-1zM539 606h1v3h-1zM540 603h1v4h-1zM541 601h1v3h-1zM542 597h1v5h-1zM543 594h1v4h-1zM544 590h1v5h-1zM545 586h1v5h-1zM546 582h1v5h-1zM547 577h1v6h-1zM548 572h1v6h-1zM549 567h1v6h-1zM550 562h1v6h-1zM551 556h1v7h-1zM552 551h1v6h-1zM553 545h1v7h-1zM554 539h1v7h-1zM555 533h1v7h-1zM556 526h1v8h-1zM557 520h1v7h-1zM558 514h1v7h-1zM559 508h1v7h-1zM560 501h1v8h-1zM561 495h1v7h-1zM562 489h1v7h-1zM563 483h1v7h-1zM564 477h1v7h-1zM565 471h1v7h-1zM566 465h1v7h-1zM567 460h1v6h-1zM568 454h1v7h-1zM569 449h1v6h-1zM570 444h1v6h-1zM571 440h1v5h-1zM572 436h1v5h-1zM573 432h1v5h-1zM574 428h1v5h-1zM575 425h1v4h-1zM576 422h1v4h-1zM577 419h1v4h-1zM578 417h1v3h-1zM579 415h1v3h-1zM580 413h1v3h-1zM581 412h1v2h-1zM582 412h1v1h-1zM583 412h1v1h-1zM584 412h1v1h-1zM585 412h1v2h-1zM586 413h1v2h-1zM587 414h1v3h-1zM588 416h1v3h-1zM589 418h1v3h-1zM590 420h1v4h-1zM591 423h1v4h-1zM592 426h1v4h-1zM593 429h1v5h-1zM594 433h1v5h-1zM595 437h1v6h-1zM596 442h1v5h-1zM597 446h1v6h-1zM598 451h1v6h-1zM599 456h1v7h-1zM600 462h1v6h-1zM601 467h1v7h-1zM602 473h1v7h-1zM603 479h1v7h-1zM604 485h1v7h-1zM605 491h1v7h-1zM606 497h1v8h-1zM607 504h1v7h-1zM608 510h1v7h-1zM609 516h1v8h-1zM610 523h1v7h-1zM611 529h1v7h-1zM612 535h1v7h-1zM613 541h1v7h-1zM614 547h1v7h-1zM615 553h1v7h-1zM616 559h1v6h-1zM617 564h1v6h-1zM618 569h1v6h-1zM619 574h1v6h-1zM620 579h1v6h-1zM621 584h1v5h-1zM622 588h1v5h-1zM623 592h1v4h-1zM624 595h1v5h-1zM625 599h1v4h-1zM626 602h1v3h-1zM627 604h1v4h-1zM628 607h1v2h-1zM629 608h1v3h-1zM630 610h1v2h-1zM631 611h1v2h-1zM632 612h1v1h-1zM633 612h1v1h-1zM634 612h1v1h-1zM635 611h1v2h-1zM636 611h1v1h-1zM637 609h1v3h-1zM638 608h1v2h-1zM639 606h1v3h-1zM640 603h1v4h-1zM641 601h1v3h-1zM642 597h1v5h-1zM643 594h1v4h-1zM644 590h1v5h-1zM645 586h1v5h-1zM646 582h1v5h-1zM647 577h1v6h-1zM648 572h1v6h-1zM649 567h1v6h-1zM650 562h1v6h-1zM651 556h1v7h-1zM652 551h1v6h-1zM653 545h1v7h-1zM654 539h1v7h-1zM655 533h1v7h-1zM656 526h1v8h-1zM657 520h1v7h-1zM658 514h1v7h-1zM659 508h1v7h-1zM660 501h1v8h-1zM661 495h1v7h-1zM662 489h1v7h-1zM663 483h1v7h-1zM664 477h1v7h-1zM665 471h1v7h-1zM666 465h1v7h-1zM667 460h1v6h-1zM668 454h1v7h-1zM669 449h1v6h-1zM670 444h1v6h-1zM671 440h1v5h-1zM672 436h1v5h-1zM673 432h1v5h-1zM674 428h1v5h-1zM675 425h1v4h-1zM676 422h1v4h-1zM677 419h1v4h-1zM678 417h1v3h-1zM679 415h1v3h-1zM680 413h1v3h-1zM681 412h1v2h-1zM682 412h1v1h-1zM683 412h1v1h-1zM684 412h1v1h-1zM685 412h1v2h-1zM686 413h1v2h-1zM687 414h1v3h-1zM688 416h1v3h-1zM689 418h1v3h-1zM690 420h1v4h-1zM691 423h1v4h-1zM692 426h1v4h-1zM693 429h1v5h-1zM694 433h1v5h-1zM695 437h1v6h-1zM696 442h1v5h-1zM697 446h1v6h-1zM698 451h1v6h-1zM699 456h1v7h-1zM700 462h1v6h-1zM701 467h1v7h-1zM702 473h1v7h-1zM703 479h1v7h-1zM704 485h1v7h-1zM705 491h1v7h-1zM706 497h1v8h-1zM707 504h1v7h-1zM708 510h1v7h-1zM709 516h1v8h-1zM710 523h1v7h-1zM711 529h1v7h-1zM712 535h1v7h-1zM713 541h1v7h-1zM714 547h1v7h-1zM715 553h1v7h-1zM716 559h1v6h-1zM717 564h1v6h-1zM718 569h1v6h-1zM719 574h1v6h-1zM720 579h1v6h-1zM721 584h1v5h-1zM722 588h1v5h-1zM723 592h1v4h-1zM724 595h1v5h-1zM725 599h1v4h-1zM726 602h1v3h-1zM727 604h1v4h-1zM728 607h1v2h-1zM729 608h1v3h-1zM730 610h1v2h-1zM731 611h1v2h-1zM732 612h1v1h-1zM733 612h1v1h-1zM734 612h1v1h-1zM735 611h1v2h-1zM736 611h1v1h-1zM737 609h1v3h-1zM738 608h1v2h-1zM739 606h1v3h-1zM740 603h1v4h-1zM741 601h1v3h-1zM742 597h1v5h-1zM743 594h1v4h-1zM744 590h1v5h-1zM745 586h1v5h-1zM746 582h1v5h-1zM747 577h1v6h-1zM748 572h1v6h-1zM749 567h1v6h-1zM750 562h1v6h-1zM751 556h1v7h-1zM752 551h1v6h-1zM753 545h1v7h-1zM754 539h1v7h-1zM755 533h1v7h-1zM756 526h1v8h-1zM757 520h1v7h-1zM758 514h1v7h-1zM759 508h1v7h-1zM760 501h1v8h-1zM761 495h1v7h-1zM762 489h1v7h-1zM763 483h1v7h-1zM764 477h1v7h-1zM765 471h1v7h-1zM766 465h1v7h-1zM767 460h1v6h-1zM768 454h1v7h-1zM769 449h1v6h-1zM770 444h1v6h-1zM771 440h1v5h-1zM772 436h1v5h-1zM773 432h1v5h-1zM774 428h1v5h-1zM775 425h1v4h-1zM776 422h1v4h-1zM777 419h1v4h-1zM778 417h1v3h-1zM779 415h1v3h-1zM780 413h1v3h-1zM781 412h1v2h-1zM782 412h1v1h-1zM783 412h1v1h-1zM784 412h1v1h-1zM785 412h1v2h-1zM786 413h1v2h-1zM787 414h1v3h-1zM788 416h1v3h-1zM789 418h1v3h-1zM790 420h1v4h-1zM791 423h1v4h-1zM792 426h1v4h-1zM793 429h1v5h-1zM794 433h1v5h-1zM795 437h1v6h-1zM796 442h1v5h-1zM797 446h1v6h-1zM798 451h1v6h-1zM799 456h1v7h-1zM800 462h1v6h-1zM801 467h1v7h-1zM802 473h1v7h-1zM803 479h1v7h-1zM804 485h1v7h-1zM805 491h1v7h-1zM806 497h1v8h-1zM807 504h1v7h-1zM808 510h1v7h-1zM809 516h1v8h-1zM810 523h1v7h-1zM811 529h1v7h-1zM812 535h1v7h-1zM813 541h1v7h-1zM814 547h1v7h-1zM815 553h1v7h-1zM816 559h1v6h-1zM817 564h1v6h-1zM818 569h1v6h-1zM819 574h1v6h-1zM820 579h1v6h-1zM821 584h1v5h-1zM822 588h1v5h-1zM823 592h1v4h-1zM824 595h1v5h-1zM825 599h1v4h-1zM826 602h1v3h-1zM827 604h1v4h-1zM828 607h1v2h-1zM829 608h1v3h-1zM830 610h1v2h-1zM831 611h1v2h-1zM832 612h1v1h-1zM833 612h1v1h-1zM834 612h1v1h-1zM835 611h1v2h-1zM836 611h1v1h-1zM837 609h1v3h-1zM838 608h1v2h-1zM839 606h1v3h-1zM840 603h1v4h-1zM841 601h1v3h-1zM842 597h1v5h-1zM843 594h1v4h-1zM844 590h1v5h-1zM845 586h1v5h-1zM846 582h1v5h-1zM847 577h1v6h-1zM848 572h1v6h-1zM849 567h1v6h-1zM850 562h1v6h-1zM851 556h1v7h-1zM852 551h1v6h-1zM853 545h1v7h-1zM854 539h1v7h-1zM855 533h1v7h-1zM856 526h1v8h-1zM857 520h1v7h-1zM858 514h1v7h-1zM859 508h1v7h-1zM860 501h1v8h-1zM861 495h1v7h-1zM862 489h1v7h-1zM863 483h1v7h-1zM864 477h1v7h-1zM865 471h1v7h-1zM866 465h1v7h-1zM867 460h1v6h-1zM868 454h1v7h-1zM869 449h1v6h-1zM870 444h1v6h-1zM871 440h1v5h-1zM872 436h1v5h-1zM873 432h1v5h-1zM874 428h1v5h-1zM875 425h1v4h-1zM876 422h1v4h-1zM877 419h1v4h-1zM878 417h1v3h-1zM879 415h1v3h-1zM880 413h1v3h-1zM881 412h1v2h-1zM882 412h1v1h-1zM883 412h1v1h-1zM884 412h1v1h-1zM885 412h1v2h-1zM886 413h1v2h-1zM887 414h1v3h-1zM888 416h1v3h-1zM889 418h1v3h-1zM890 420h1v4h-1zM891 423h1v4h-1zM892 426h1v4h-1zM893 429h1v5h-1zM894 433h1v5h-1zM895 437h1v6h-1zM896 442h1v5h-1zM897 446h1v6h-1zM898 451h1v6h-1zM899 456h1v7h-1zM900 462h1v6h-1zM901 467h1v7h-1zM902 473h1v7h-1zM903 479h1v7h-1zM904 485h1v7h-1zM905 491h1v7h-1zM906 497h1v8h-1zM907 504h1v7h-1zM908 510h1v7h-1zM909 516h1v8h-1zM910 523h1v7h-1zM911 529h1v7h-1zM912 535h1v7h-1zM913 541h1v7h-1zM914 547h1v7h-1zM915 553h1v7h-1zM916 559h1v6h-1zM917 564h1v6h-1zM918 569h1v6h-1zM919 574h1v6h-1zM920 579h1v6h-1zM921 584h1v5h-1zM922 588h1v5h-1zM923 592h1v4h-1zM924 595h1v5h-1zM925 599h1v4h-1zM926 602h1v3h-1zM927 604h1v4h-1zM928 607h1v2h-1zM929 608h1v3h-1zM930 610h1v2h-1zM931 611h1v2h-1zM932 612h1v1h-1zM933 612h1v1h-1zM934 612h1v1h-1zM935 611h1v2h-1zM936 611h1v1h-1zM937 609h1v3h-1zM938 608h1v2h-1zM939 606h1v3h-1zM940 603h1v4h-1zM941 601h1v3h-1zM942 597h1v5h-1zM943 594h1v4h-1zM944 590h1v5h-1zM945 586h1v5h-1zM946 582h1v5h-1zM947 577h1v6h-1zM948 572h1v6h-1zM949 567h1v6h-1zM950 562h1v6h-1zM951 556h1v7h-1zM952 551h1v6h-1zM953 545h1v7h-1zM954 539h1v7h-1zM955 533h1v7h-1zM956 526h1v8h-1zM957 520h1v7h-1zM958 514h1v7h-1zM959 508h1v7h-1zM960 501h1v8h-1zM961 495h1v7h-1zM962 489h1v7h-1zM963 483h1v7h-1zM964 477h1v7h-1zM965 471h1v7h-1zM966 465h1v7h-1zM967 460h1v6h-1zM968 454h1v7h-1zM969 449h1v6h-1zM970 444h1v6h-1zM971 440h1v5h-1zM972 436h1v5h-1zM973 432h1v5h-1zM974 428h1v5h-1zM975 425h1v4h-1zM976 422h1v4h-1zM977 419h1v4h-1zM978 417h1v3h-1zM979 415h1v3h-1zM980 413h1v3h-1zM981 412h1v2h-1zM982 412h1v1h-1zM983 412h1v1h-1zM984 412h1v1h-1zM985 412h1v2h-1zM986 413h1v2h-1zM987 414h1v3h-1zM988 416h1v3h-1zM989 418h1v3h-1zM990 420h1v4h-1zM991 423h1v4h-1zM992 426h1v4h-1zM993 429h1v5h-1zM994 433h1v5h-1zM995 437h1v6h-1zM996 442h1v5h-1zM997 446h1v6h-1zM998 451h1v6h-1zM999 456h1v7h-1zM1000 462h1v6h-1zM1001 467h1v7h-1zM1002 473h1v7h-1zM1003 479h1v7h-1zM1004 485h1v7h-1zM1005 491h1v7h-1zM1006 497h1v8h-1zM1007 504h1v7h-1zM1008 510h1v7h-1zM1009 516h1v8h-1zM1010 523h1v7h-1zM1011 529h1v7h-1zM1012 535h1v7h-1zM1013 541h1v7h-1zM1014 547h1v7h-1zM1015 553h1v7h-1zM1016 559h1v6h-1zM1017 564h1v6h-1zM1018 569h1v6h-1zM1019 574h1v6h-1zM1020 579h1v6h-1zM1021 584h1v5h-1zM1022 588h1v5h-1zM1023 592h1v4h-1zM1024 595h1v5h-1zM1025 599h1v4h-1zM1026 602h1v3h-1zM1027 604h1v4h-1zM1028 607h1v2h-1zM1029 608h1v3h-1zM1030 610h1v2h-1zM1031 611h1v2h-1zM1032 612h1v1h-1zM1033 612h1v1h-1zM1034 612h1v1h-1z"/>
<rect x="534" y="102" width="1" height="760" fill="#ffa500"/>
<g fill="#808080"><rect x="34" y="457" width="1" height="10"/><rect x="54" y="457" width="1" height="10"/><rect x="74" y="457" width="1" height="10"/><rect x="94" y="457" width="1" height="10"/><rect x="114" y="457" width="1" height="10"/><rect x="134" y="457" width="1" height="10"/><rect x="154" y="457" width="1" height="10"/><rect x="174" y="457" width="1" height="10"/><rect x="194" y="457" width="1" height="10"/><rect x="214" y="457" width="1" height="10"/><rect x="234" y="457" width="1" height="10"/><rect x="254" y="457" width="1" height="10"/><rect x="274" y="457" width="1" height="10"/><rect x="294" y="457" width="1" height="10"/><rect x="314" y="457" width="1" height="10"/><rect x="334" y="457" width="1" height="10"/><rect x="354" y="457" width="1" height="10"/><rect x="374" y="457" width="1" height="10"/><rect x="394" y="457" width="1" height="10"/><rect x="414" y="457" width="1" height="10"/><rect x="434" y="457" width="1" height="10"/><rect x="454" y="457" width="1" height="10"/><rect x="474" y="457" width="1" height="10"/><rect x="494" y="457" width="1" height="10"/><rect x="514" y="457" width="1" height="10"/><rect x="534" y="457" width="1" height="10"/><rect x="554" y="457" width="1" height="10"/><rect x="574" y="457" width="1" height="10"/><rect x="594" y="457" width="1" height="10"/><rect x="614" y="457" width="1" height="10"/><rect x="634" y="457" width="1" height="10"/><rect x="654" y="457" width="1" height="10"/><rect x="674" y="457" width="1" height="10"/><rect x="694" y="457" width="1" height="10"/><rect x="714" y="457" width="1" height="10"/><rect x="734" y="457" width="1" height="10"/><rect x="754" y="457" width="1" height="10"/><rect x="774" y="457" width="1" height="10"/><rect x="794" y="457" width="1" height="10"/><rect x="814" y="457" width="1" height="10"/><rect x="834" y="457" width="1" height="10"/><rect x="854" y="457" width="1" height="10"/><rect x="874" y="457" width="1" height="10"/><rect x="894" y="457" width="1" height="10"/><rect x="914" y="457" width="1" height="10"/><rect x="934" y="457" width="1" height="10"/><rect x="954" y="457" width="1" height="10"/><rect x="974" y="457" width="1" height="10"/><rect x="994" y="457" width="1" height="10"/><rect x="1014" y="457" width="1" height="10"/><rect x="1034" y="457" width="1" height="10"/><rect x="530" y="122" width="8" height="1"/><rect x="530" y="142" width="8" height="1"/><rect x="530" y="162" width="8" height="1"/><rect x="530" y="182" width="8" height="1"/><rect x="530" y="202" width="8" height="1"/><rect x="530" y="222" width="8" height="1"/><rect x="530" y="242" width="8" height="1"/><rect x="530" y="262" width="8" height="1"/><rect x="530" y="282" width="8" height="1"/><rect x="530" y="302" width="8" height="1"/><rect x="530" y="322" width="8" height="1"/><rect x="530" y="342" width="8" height="1"/><rect x="530" y="362" width="8" height="1"/><rect x="530" y="382" width="8" height="1"/><rect x="530" y="402" width="8" height="1"/><rect x="530" y="422" width="8" height="1"/><rect x="530" y="442" width="8" height="1"/><rect x="530" y="462" width="8" height="1"/><rect x="530" y="482" width="8" height="1"/><rect x="530" y="502" width="8" height="1"/><rect x="530" y="522" width="8" height="1"/><rect x="530" y="542" width="8" height="1"/><rect x="530" y="562" width="8" height="1"/><rect x="530" y="582" width="8" height="1"/><rect x="530" y="602" width="8" height="1"/><rect x="530" y="622" width="8" height="1"/><rect x="530" y="642" width="8" height="1"/><rect x="530" y="662" width="8" height="1"/><rect x="530" y="682" width="8" height="1"/><rect x="530" y="702" width="8" height="1"/><rect x="530" y="722" width="8" height="1"/><rect x="530" y="742" width="8" height="1"/><rect x="530" y="762" width="8" height="1"/><rect x="530" y="782" width="8" height="1"/><rect x="530" y="802" width="8" height="1"/><rect x="530" y="822" width="8" height="1"/><rect x="530" y="842" width="8" height="1"/></g>
<path fill="#0000b8" d="M34 347h1v8h-1zM35 354h1v7h-1zM36 360h1v7h-1zM37 366h1v8h-1zM38 373h1v7h-1zM39 379h1v7h-1zM40 385h1v7h-1zM41 391h1v7h-1zM42 397h1v7h-1zM43 403h1v7h-1zM44 409h1v6h-1zM45 414h1v6h-1zM46 419h1v6h-1zM47 424h1v6h-1zM48 429h1v6h-1zM49 434h1v5h-1zM50 438h1v5h-1zM51 442h1v4h-1zM52 445h1v5h-1zM53 449h1v4h-1zM54 452h1v3h-1zM55 454h1v4h-1zM56 457h1v2h-1zM57 458h1v3h-1zM58 460h1v2h-1zM59 461h1v2h-1zM60 462h1v1h-1zM61 462h1v1h-1zM62 462h1v1h-1zM63 461h1v2h-1zM64 461h1v1h-1zM65 459h1v3h-1zM66 458h1v2h-1zM67 456h1v3h-1zM68 453h1v4h-1zM69 451h1v3h-1zM70 447h1v5h-1zM71 444h1v4h-1zM72 440h1v5h-1zM73 436h1v5h-1zM74 432h1v5h-1zM75 427h1v6h-1zM76 422h1v6h-1zM77 417h1v6h-1zM78 412h1v6h-1zM79 406h1v7h-1zM80 401h1v6h-1zM81 395h1v7h-1zM82 389h1v7h-1zM83 383h1v7h-1zM84 376h1v8h-1zM85 370h1v7h-1zM86 364h1v7h-1zM87 358h1v7h-1zM88 351h1v8h-1zM89 345h1v7h-1zM90 339h1v7h-1zM91 333h1v7h-1zM92 327h1v7h-1zM93 321h1v7h-1zM94 315h1v7h-1zM95 310h1v6h-1zM96 304h1v7h-1zM97 299h1v6h-1zM98 294h1v6h-1zM99 290h1v5h-1zM100 286h1v5h-1zM101 282h1v5h-1zM102 278h1v5h-1zM103 275h1v4h-1zM104 272h1v4h-1zM105 269h1v4h-1zM106 267h1v3h-1zM107 265h1v3h-1zM108 263h1v3h-1zM109 262h1v2h-1zM110 262h1v1h-1zM111 262h1v1h-1zM112 262h1v1h-1zM113 262h1v2h-1zM114 263h1v2h-1zM115 264h1v3h-1zM116 266h1v3h-1zM117 268h1v3h-1zM118 270h1v4h-1zM119 273h1v4h-1zM120 276h1v4h-1zM121 279h1v5h-1zM122 283h1v5h-1zM123 287h1v6h-1zM124 292h1v5h-1zM125 296h1v6h-1zM126 301h1v6h-1zM127 306h1v7h-1zM128 312h1v6h-1zM129 317h1v7h-1zM130 323h1v7h-1zM131 329h1v7h-1zM132 335h1v7h-1zM133 341h1v7h-1zM134 347h1v8h-1zM135 354h1v7h-1zM136 360h1v7h-1zM137 366h1v8h-1zM138 373h1v7h-1zM139 379h1v7h-1zM140 385h1v7h-1zM141 391h1v7h-1zM142 397h1v7h-1zM143 403h1v7h-1zM144 409h1v6h-1zM145 414h1v6h-1zM146 419h1v6h-1zM147 424h1v6h-1zM148 429h1v6h-1zM149 434h1v5h-1zM150 438h1v5h-1zM151 442h1v4h-1zM152 445h1v5h-1zM153 449h1v4h-1zM154 452h1v3h-1zM155 454h1v4h-1zM156 457h1v2h-1zM157 458h1v3h-1zM158 460h1v2h-1zM159 461h1v2h-1zM160 462h1v1h-1zM161 462h1v1h-1zM162 462h1v1h-1zM163 461h1v2h-1zM164 461h1v1h-1zM165 459h1v3h-1zM166 458h1v2h-1zM167 456h1v3h-1zM168 453h1v4h-1zM169 451h1v3h-1zM170 447h1v5h-1zM171 444h1v4h-1zM172 440h1v5h-1zM173 436h1v5h-1zM174 432h1v5h-1zM175 427h1v6h-1zM176 422h1v6h-1zM177 417h1v6h-1zM178 412h1v6h-1zM179 406h1v7h-1zM180 401h1v6h-1zM181 395h1v7h-1zM182 389h1v7h-1zM183 383h1v7h-1zM184 376h1v8h-1zM185 370h1v7h-1zM186 364h1v7h-1zM187 358h1v7h-1zM188 351h1v8h-1zM189 345h1v7h-1zM190 339h1v7h-1zM191 333h1v7h-1zM192 327h1v7h-1zM193 321h1v7h-1zM194 315h1v7h-1zM195 310h1v6h-1zM196 304h1v7h-1zM197 299h1v6h-1zM198 294h1v6h-1zM199 290h1v5h-1zM200 286h1v5h-1zM201 282h1v5h-1zM202 278h1v5h-1zM203 275h1v4h-1zM204 272h1v4h-1zM205 269h1v4h-1zM206 267h1v3h-1zM207 265h1v3h-1zM208 263h1v3h-1zM209 262h1v2h-1zM210 262h1v1h-1zM211 262h1v1h-1zM212 262h1v1h-1zM213 262h1v2h-1zM214 263h1v2h-1zM215 264h1v3h-1zM216 266h1v3h-1zM217 268h1v3h-1zM218 270h1v4h-1zM219 273h1v4h-1zM220 276h1v4h-1zM221 279h1v5h-1zM222 283h1v5h-1zM223 287h1v6h-1zM224 292h1v5h-1zM225 296h1v6h-1zM226 301h1v6h-1zM227 306h1v7h-1zM228 312h1v6h-1zM229 317h1v7h-1zM230 323h1v7h-1zM231 329h1v7h-1zM232 335h1v7h-1zM233 341h1v7h-1zM234 347h1v8h-1zM235 354h1v7h-1zM236 360h1v7h-1zM237 366h1v8h-1zM238 373h1v7h-1zM239 379h1v7h-1zM240 385h1v7h-1zM241 391h1v7h-1zM242 397h1v7h-1zM243 403h1v7h-1zM244 409h1v6h-1zM245 414h1v6h-1zM246 419h1v6h-1zM247 424h1v6h-1zM248 429h1v6h-1zM249 434h1v5h-1zM250 438h1v5h-1zM251 442h1v4h-1zM252 445h1v5h-1zM253 449h1v4h-1zM254 452h1v3h-1zM255 454h1v4h-1zM256 457h1v2h-1zM257 458h1v3h-1zM258 460h1v2h-1zM259 461h1v2h-1zM260 462h1v1h-1zM261 462h1v1h-1zM262 462h1v1h-1zM263 461h1v2h-1zM264 461h1v1h-1zM265 459h1v3h-1zM266 458h1v2h-1zM267 456h1v3h-1zM268 453h1v4h-1zM269 451h1v3h-1zM270 447h1v5h-1zM271 444h1v4h-1zM272 440h1v5h-1zM273 436h1v5h-1zM274 432h1v5h-1zM275 427h1v6h-1zM276 422h1v6h-1zM277 417h1v6h-1zM278 412h1v6h-1zM279 406h1v7h-1zM280 401h1v6h-1zM281 395h1v7h-1zM282 389h1v7h-1zM283 383h1v7h-1zM284 376h1v8h-1zM285 370h1v7h-1zM286 364h1v7h-1zM287 358h1v7h-1zM288 351h1v8h-1zM289 345h1v7h-1zM290 339h1v7h-1zM291 333h1v7h-1zM292 327h1v7h-1zM293 321h1v7h-1zM294 315h1v7h-1zM295 310h1v6h-1zM296 304h1v7h-1zM297 299h1v6h-1zM298 294h1v6h-1zM299 290h1v5h-1zM300 286h1v5h-1zM301 282h1v5h-1zM302 278h1v5h-1zM303 275h1v4h-1zM304 272h1v4h-1zM305 269h1v4h-1zM306 267h1v3h-1zM307 265h1v3h-1zM308 263h1v3h-1zM309 262h1v2h-1zM310 262h1v1h-1zM311 262h1v1h-1zM312 262h1v1h-1zM313 262h1v2h-1zM314 263h1v2h-1zM315 264h1v3h-1zM316 266h1v3h-1zM317 268h1v3h-1zM318 270h1v4h-1zM319 273h1v4h-1zM320 276h1v4h-1zM321 279h1v5h-1zM322 283h1v5h-1zM323 287h1v6h-1zM324 292h1v5h-1zM325 296h1v6h-1zM326 301h1v6h-1zM327 306h1v7h-1zM328 312h1v6h-1zM329 317h1v7h-1zM330 323h1v7h-1zM331 329h1v7h-1zM332 335h1v7h-1zM333 341h1v7h-1zM334 347h1v8h-1zM335 354h1v7h-1zM336 360h1v7h-1zM337 366h1v8h-1zM338 373h1v7h-1zM339 379h1v7h-1zM340 385h1v7h-1zM341 391h1v7h-1zM342 397h1v7h-1zM343 403h1v7h-1zM344 409h1v6h-1zM345 414h1v6h-1zM346 419h1v6h-1zM347 424h1v6h-1zM348 429h1v6h-1zM349 434h1v5h-1zM350 438h1v5h-1zM351 442h1v4h-1zM352 445h1v5h-1zM353 449h1v4h-1zM354 452h1v3h-1zM355 454h1v4h-1zM356 457h1v2h-1zM357 458h1v3h-1zM358 460h1v2h-1zM359 461h1v2h-1zM360 462h1v1h-1zM361 462h1v1h-1zM362 462h1v1h-1zM363 461h1v2h-1zM364 461h1v1h-1zM365 459h1v3h-1zM366 458h1v2h-1zM367 456h1v3h-1zM368 453h1v4h-1zM369 451h1v3h-1zM370 447h1v5h-1zM371 444h1v4h-1zM372 440h1v5h-1zM373 436h1v5h-1zM374 432h1v5h-1zM375 427h1v6h-1zM376 422h1v6h-1zM377 417h1v6h-1zM378 412h1v6h-1zM379 406h1v7h-1zM380 401h1v6h-1zM381 395h1v7h-1zM382 389h1v7h-1zM383 383h1v7h-1zM384 376h1v8h-1zM385 370h1v7h-1zM386 364h1v7h-1zM387 358h1v7h-1zM388 351h1v8h-1zM389 345h1v7h-1zM390 339h1v7h-1zM391 333h1v7h-1zM392 327h1v7h-1zM393 321h1v7h-1zM394 315h1v7h-1zM395 310h1v6h-1zM396 304h1v7h-1zM397 299h1v6h-1zM398 294h1v6h-1zM399 290h1v5h-1zM400 286h1v5h-1zM401 282h1v5h-1zM402 278h1v5h-1zM403 275h1v4h-1zM404 272h1v4h-1zM405 269h1v4h-1zM406 267h1v3h-1zM407 265h1v3h-1zM408 263h1v3h-1zM409 262h1v2h-1zM410 262h1v1h-1zM411 262h1v1h-1zM412 262h1v1h-1zM413 262h1v2h-1zM414 263h1v2h-1zM415 264h1v3h-1zM416 266h1v3h-1zM417 268h1v3h-1zM418 270h1v4h-1zM419 273h1v4h-1zM420 276h1v4h-1zM421 279h1v5h-1zM422 283h1v5h-1zM423 287h1v6h-1zM424 292h1v5h-1zM425 296h1v6h-1zM426 301h1v6h-1zM427 306h1v7h-1zM428 312h1v6h-1zM429 317h1v7h-1zM430 323h1v7h-1zM431 329h1v7h-1zM432 335h1v7h-1zM433 341h1v7h-1zM434 347h1v8h-1zM435 354h1v7h-1zM436 360h1v7h-1zM437 366h1v8h-1zM438 373h1v7h-1zM439 379h1v7h-1zM440 385h1v7h-1zM441 391h1v7h-1zM442 397h1v7h-1zM443 403h1v7h-1zM444 409h1v6h-1zM445 414h1v6h-1zM446 419h1v6h-1zM447 424h1v6h-1zM448 429h1v6h-1zM449 434h1v5h-1zM450 438h1v5h-1zM451 442h1v4h-1zM452 445h1v5h-1zM453 449h1v4h-1zM454 452h1v3h-1zM455 454h1v4h-1zM456 457h1v2h-1zM457 458h1v3h-1zM458 460h1v2h-1zM459 461h1v2h-1zM460 462h1v1h-1zM461 462h1v1h-1zM462 462h1v1h-1zM463 461h1v2h-1zM464 461h1v1h-1zM465 459h1v3h-1zM466 458h1v2h-1zM467 456h1v3h-1zM468 453h1v4h-1zM469 451h1v3h-1zM470 447h1v5h-1zM471 444h1v4h-1zM472 440h1v5h-1zM473 436h1v5h-1zM474 432h1v5h-1zM475 427h1v6h-1zM476 422h1v6h-1zM477 417h1v6h-1zM478 412h1v6h-1zM479 406h1v7h-1zM480 401h1v6h-1zM481 395h1v7h-1zM482 389h1v7h-1zM483 383h1v7h-1zM484 376h1v8h-1zM485 370h1v7h-1zM486 364h1v7h-1zM487 358h1v7h-1zM488 351h1v8h-1zM489 345h1v7h-1zM490 339h1v7h-1zM491 333h1v7h-1zM492 327h1v7h-1zM493 321h1v7h-1zM494 315h1v7h-1zM495 310h1v6h-1zM496 304h1v7h-1zM497 299h1v6h-1zM498 294h1v6h-1zM499 290h1v5h-1zM500 286h1v5h-1zM501 282h1v5h-1zM502 278h1v5h-1zM503 275h1v4h-1zM504 272h1v4h-1zM505 269h1v4h-1zM506 267h1v3h-1zM507 265h1v3h-1zM508 263h1v3h-1zM509 262h1v2h-1zM510 262h1v1h-1zM511 262h1v1h-1zM512 262h1v1h-1zM513 262h1v2h-1zM514 263h1v2h-1zM515 264h1v3h-1zM516 266h1v3h-1zM517 268h1v3h-1zM518 270h1v4h-1zM519 273h1v4h-1zM520 276h1v4h-1zM521 279h1v5h-1zM522 283h1v5h-1zM523 287h1v6h-1zM524 292h1v5h-1zM525 296h1v6h-1zM526 301h1v6h-1zM527 306h1v7h-1zM528 312h1v6h-1zM529 317h1v7h-1zM530 323h1v7h-1zM531 329h1v7h-1zM532 335h1v7h-1zM533 341h1v7h-1zM534 347h1v8h-1zM535 354h1v7h-1zM536 360h1v7h-1zM537 366h1v8h-1zM538 373h1v7h-1zM539 379h1v7h-1zM540 385h1v7h-1zM541 391h1v7h-1zM542 397h1v7h-1zM543 403h1v7h-1zM544 409h1v6h-1zM545 414h1v6h-1zM546 419h1v6h-1zM547 424h1v6h-1zM548 429h1v6h-1zM549 434h1v5h-1zM550 438h1v5h-1zM551 442h1v4h-1zM552 445h1v5h-1zM553 449h1v4h-1zM554 452h1v3h-1zM555 454h1v4h-1zM556 457h1v2h-1zM557 458h1v3h-1zM558 460h1v2h-1zM559 461h1v2h-1zM560 462h1v1h-1zM561 462h1v1h-1zM562 462h1v1h-1zM563 461h1v2h-1zM564 461h1v1h-1zM565 459h1v3h-1zM566 458h1v2h-1zM567 456h1v3h-1zM568 453h1v4h-1zM569 451h1v3h-1zM570 447h1v5h-1zM571 444h1v4h-1zM572 440h1v5h-1zM573 436h1v5h-1zM574 432h1v5h-1zM575 427h1v6h-1zM576 422h1v6h-1zM577 417h1v6h-1zM578 412h1v6h-1zM579 406h1v7h-1zM580 401h1v6h-1zM581 395h1v7h-1zM582 389h1v7h-1zM583 383h1v7h-1zM584 376h1v8h-1zM585 370h1v7h-1zM586 364h1v7h-1zM587 358h1v7h-1zM588 351h1v8h-1zM589 345h1v7h-1zM590 339h1v7h-1zM591 333h1v7h-1zM592 327h1v7h-1zM593 321h1v7h-1zM594 315h1v7h-1zM595 310h1v6h-1zM596 304h1v7h-1zM597 299h1v6h-1zM598 294h1v6h-1zM599 290h1v5h-1zM600 286h1v5h-1zM601 282h1v5h-1zM602 278h1v5h-1zM603 275h1v4h-1zM604 272h1v4h-1zM605 269h1v4h-1zM606 267h1v3h-1zM607 265h1v3h-1zM608 263h1v3h-1zM609 262h1v2h-1zM610 262h1v1h-1zM611 262h1v1h-1zM612 262h1v1h-1zM613 262h1v2h-1zM614 263h1v2h-1zM615 264h1v3h-1zM616 266h1v3h-1zM617 268h1v3h-1zM618 270h1v4h-1zM619 273h1v4h-1zM620 276h1v4h-1zM621 279h1v5h-1zM622 283h1v5h-1zM623 287h1v6h-1zM624 292h1v5h-1zM625 296h1v6h-1zM626 301h1v6h-1zM627 306h1v7h-1zM628 312h1v6h-1zM629 317h1v7h-1zM630 323h1v7h-1zM631 329h1v7h-1zM632 335h1v7h-1zM633 341h1v7h-1zM634 347h1v8h-1zM635 354h1v7h-1zM636 360h1v7h-1zM637 366h1v8h-1zM638 373h1v7h-1zM639 379h1v7h-1zM640 385h1v7h-1zM641 391h1v7h-1zM642 397h1v7h-1zM643 403h1v7h-1zM644 409h1v6h-1zM645 414h1v6h-1zM646 419h1v6h-1zM647 424h1v6h-1zM648 429h1v6h-1zM649 434h1v5h-1zM650 438h1v5h-1zM651 442h1v4h-1zM652 445h1v5h-1zM653 449h1v4h-1zM654 452h1v3h-1zM655 454h1v4h-1zM656 457h1v2h-1zM657 458h1v3h-1zM658 460h1v2h-1zM659 461h1v2h-1zM660 462h1v1h-1zM661 462h1v1h-1zM662 462h1v1h-1zM663 461h1v2h-1zM664 461h1v1h-1zM665 459h1v3h-1zM666 458h1v2h-1zM667 456h1v3h-1zM668 453h1v4h-1zM669 451h1v3h-1zM670 447h1v5h-1zM671 444h1v4h-1zM672 440h1v5h-1zM673 436h1v5h-1zM674 432h1v5h-1zM675 427h1v6h-1zM676 422h1v6h-1zM677 417h1v6h-1zM678 412h1v6h-1zM679 406h1v7h-1zM680 401h1v6h-1zM681 395h1v7h-1zM682 389h1v7h-1zM683 383h1v7h-1zM684 376h1v8h-1zM685 370h1v7h-1zM686 364h1v7h-1zM687 358h1v7h-1zM688 351h1v8h-1zM689 345h1v7h-1zM690 339h1v7h-1zM691 333h1v7h-1zM692 327h1v7h-1zM693 321h1v7h-1zM694 315h1v7h-1zM695 310h1v6h-1zM696 304h1v7h-1zM697 299h1v6h-1zM698 294h1v6h-1zM699 290h1v5h-1zM700 286h1v5h-1zM701 282h1v5h-1zM702 278h1v5h-1zM703 275h1v4h-1zM704 272h1v4h-1zM705 269h1v4h-1zM706 267h1v3h-1zM707 265h1v3h-1zM708 263h1v3h-1zM709 262h1v2h-1zM710 262h1v1h-1zM711 262h1v1h-1zM712 262h1v1h-1zM713 262h1v2h-1zM714 263h1v2h-1zM715 264h1v3h-1zM716 266h1v3h-1zM717 268h1v3h-1zM718 270h1v4h-1zM719 273h1v4h-1zM720 276h1v4h-1zM721 279h1v5h-1zM722 283h1v5h-1zM723 287h1v6h-1zM724 292h1v5h-1zM725 296h1v6h-1zM726 301h1v6h-1zM727 306h1v7h-1zM728 312h1v6h-1zM729 317h1v7h-1zM730 323h1v7h-1zM731 329h1v7h-1zM732 335h1v7h-1zM733 341h1v7h-1zM734 347h1v8h-1zM735 354h1v7h-1zM736 360h1v7h-1zM737 366h1v8h-1zM738 373h1v7h-1zM739 379h1v7h-1zM740 385h1v7h-1zM741 391h1v7h-1zM742 397h1v7h-1zM743 403h1v7h-1zM744 409h1v6h-1zM745 414h1v6h-1zM746 419h1v6h-1zM747 424h1v6h-1zM748 429h1v6h-1zM749 434h1v5h-1zM750 438h1v5h-1zM751 442h1v4h-1zM752 445h1v5h-1zM753 449h1v4h-1zM754 452h1v3h-1zM755 454h1v4h-1zM756 457h1v2h-1zM757 458h1v3h-1zM758 460h1v2h-1zM759 461h1v2h-1zM760 462h1v1h-1zM761 462h1v1h-1zM762 462h1v1h-1zM763 461h1v2h-1zM764 461h1v1h-1zM765 459h1v3h-1zM766 458h1v2h-1zM767 456h1v3h-1zM768 453h1v4h-1zM769 451h1v3h-1zM770 447h1v5h-1zM771 444h1v4h-1zM772 440h1v5h-1zM773 436h1v5h-1zM774 432h1v5h-1zM775 427h1v6h-1zM776 422h1v6h-1zM777 417h1v6h-1zM778 412h1v6h-1zM779 406h1v7h-1zM780 401h1v6h-1zM781 395h1v7h-1zM782 389h1v7h-1zM783 383h1v7h-1zM784 376h1v8h-1zM785 370h1v7h-1zM786 364h1v7h-1zM787 358h1v7h-1zM788 351h1v8h-1zM789 345h1v7h-1zM790 339h1v7h-1zM791 333h1v7h-1zM792 327h1v7h-1zM793 321h1v7h-1zM794 315h1v7h-1zM795 310h1v6h-1zM796 304h1v7h-1zM797 299h1v6h-1zM798 294h1v6h-1zM799 290h1v5h-1zM800 286h1v5h-1zM801 282h1v5h-1zM802 278h1v5h-1zM803 275h1v4h-1zM804 272h1v4h-1zM805 269h1v4h-1zM806 267h1v3h-1zM807 265h1v3h-1zM808 263h1v3h-1zM809 262h1v2h-1zM810 262h1v1h-1zM811 262h1v1h-1zM812 262h1v1h-1zM813 262h1v2h-1zM814 263h1v2h-1zM815 264h1v3h-1zM816 266h1v3h-1zM817 268h1v3h-1zM818 270h1v4h-1zM819 273h1v4h-1zM820 276h1v4h-1zM821 279h1v5h-1zM822 283h1v5h-1zM823 287h1v6h-1zM824 292h1v5h-1zM825 296h1v6h-1zM826 301h1v6h-1zM827 306h1v7h-1zM828 312h1v6h-1zM829 317h1v7h-1zM830 323h1v7h-1zM831 329h1v7h-1zM832 335h1v7h-1zM833 341h1v7h-1zM834 347h1v8h-1zM835 354h1v7h-1zM836 360h1v7h-1zM837 366h1v8h-1zM838 373h1v7h-1zM839 379h1v7h-1zM840 385h1v7h-1zM841 391h1v7h-1zM842 397h1v7h-1zM843 403h1v7h-1zM844 409h1v6h-1zM845 414h1v6h-1zM846 419h1v6h-1zM847 424h1v6h-1zM848 429h1v6h-1zM849 434h1v5h-1zM850 438h1v5h-1zM851 442h1v4h-1zM852 445h1v5h-1zM853 449h1v4h-1zM854 452h1v3h-1zM855 454h1v4h-1zM856 457h1v2h-1zM857 458h1v3h-1zM858 460h1v2h-1zM859 461h1v2h-1zM860 462h1v1h-1zM861 462h1v1h-1zM862 462h1v1h-1zM863 461h1v2h-1zM864 461h1v1h-1zM865 459h1v3h-1zM866 458h1v2h-1zM867 456h1v3h-1zM868 453h1v4h-1zM869 451h1v3h-1zM870 447h1v5h-1zM871 444h1v4h-1zM872 440h1v5h-1zM873 436h1v5h-1zM874 432h1v5h-1zM875 427h1v6h-1zM876 422h1v6h-1zM877 417h1v6h-1zM878 412h1v6h-1zM879 406h1v7h-1zM880 401h1v6h-1zM881 395h1v7h-1zM882 389h1v7h-1zM883 383h1v7h-1zM884 376h1v8h-1zM885 370h1v7h-1zM886 364h1v7h-1zM887 358h1v7h-1zM888 351h1v8h-1zM889 345h1v7h-1zM890 339h1v7h-1zM891 333h1v7h-1zM892 327h1v7h-1zM893 321h1v7h-1zM894 315h1v7h-1zM895 310h1v6h-1zM896 304h1v7h-1zM897 299h1v6h-1zM898 294h1v6h-1zM899 290h1v5h-1zM900 286h1v5h-1zM901 282h1v5h-1zM902 278h1v5h-1zM903 275h1v4h-1zM904 272h1v4h-1zM905 269h1v4h-1zM906 267h1v3h-1zM907 265h1v3h-1zM908 263h1v3h-1zM909 262h1v2h-1zM910 262h1v1h-1zM911 262h1v1h-1zM912 262h1v1h-1zM913 262h1v2h-1zM914 263h1v2h-1zM915 264h1v3h-1zM916 266h1v3h-1zM917 268h1v3h-1zM918 270h1v4h-1zM919 273h1v4h-1zM920 276h1v4h-1zM921 279h1v5h-1zM922 283h1v5h-1zM923 287h1v6h-1zM924 292h1v5h-1zM925 296h1v6h-1zM926 301h1v6h-1zM927 306h1v7h-1zM928 312h1v6h-1zM929 317h1v7h-1zM930 323h1v7h-1zM931 329h1v7h-1zM932 335h1v7h-1zM933 341h1v7h-1zM934 347h1v8h-1zM935 354h1v7h-1zM936 360h1v7h-1zM937 366h1v8h-1zM938 373h1v7h-1zM939 379h1v7h-1zM940 385h1v7h-1zM941 391h1v7h-1zM942 397h1v7h-1zM943 403h1v7h-1zM944 409h1v6h-1zM945 414h1v6h-1zM946 419h1v6h-1zM947 424h1v6h-1zM948 429h1v6h-1zM949 434h1v5h-1zM950 438h1v5h-1zM951 442h1v4h-1zM952 445h1v5h-1zM953 449h1v4h-1zM954 452h1v3h-1zM955 454h1v4h-1zM956 457h1v2h-1zM957 458h1v3h-1zM958 460h1v2h-1zM959 461h1v2h-1zM960 462h1v1h-1zM961 462h1v1h-1zM962 462h1v1h-1zM963 461h1v2h-1zM964 461h1v1h-1zM965 459h1v3h-1zM966 458h1v2h-1zM967 456h1v3h-1zM968 453h1v4h-1zM969 451h1v3h-1zM970 447h1v5h-1zM971 444h1v4h-1zM972 440h1v5h-1zM973 436h1v5h-1zM974 432h1v5h-1zM975 427h1v6h-1zM976 422h1v6h-1zM977 417h1v6h-1zM978 412h1v6h-1zM979 406h1v7h-1zM980 401h1v6h-1zM981 395h1v7h-1zM982 389h1v7h-1zM983 383h1v7h-1zM984 376h1v8h-1zM985 370h1v7h-1zM986 364h1v7h-1zM987 358h1v7h-1zM988 351h1v8h-1zM989 345h1v7h-1zM990 339h1v7h-1zM991 333h1v7h-1zM992 327h1v7h-1zM993 321h1v7h-1zM994 315h1v7h-1zM995 310h1v6h-1zM996 304h1v7h-1zM997 299h1v6h-1zM998 294h1v6h-1zM999 290h1v5h-1zM1000 286h1v5h-1zM1001 282h1v5h-1zM1002 278h1v5h-1zM1003 275h1v4h-1zM1004 272h1v4h-1zM1005 269h1v4h-1zM1006 267h1v3h-1zM1007 265h1v3h-1zM1008 263h1v3h-1zM1009 262h1v2h-1zM1010 262h1v1h-1zM1011 262h1v1h-1zM1012 262h1v1h-1zM1013 262h1v2h-1zM1014 263h1v2h-1zM1015 264h1v3h-1zM1016 266h1v3h-1zM1017 268h1v3h-1zM1018 270h1v4h-1zM1019 273h1v4h-1zM1020 276h1v4h-1zM1021 279h1v5h-1zM1022 283h1v5h-1zM1023 287h1v6h-1zM1024 292h1v5h-1zM1025 296h1v6h-1zM1026 301h1v6h-1zM1027 306h1v7h-1zM1028 312h1v6h-1zM1029 317h1v7h-1zM1030 323h1v7h-1zM1031 329h1v7h-1zM1032 335h1v7h-1zM1033 341h1v7h-1zM1034 347h1v1h-1z"/>
<g shape-rendering="auto"><path d="M529.500 102h10l-5 7z" fill="#ffa500"/>
<path d="M436.800 84.300h11l-5.500 10.400z" fill="#ffa500"/>
<path d="M26 358l8.500 4.500l-8.500 4.500z" fill="#0000b8"/>
<path d="M26 508l8.500 4.500l-8.500 4.500z" fill="#00ff00"/>
<path d="M26 658l8.500 4.500l-8.500 4.500z" fill="#ffd700"/></g>
</svg>
<span class="t" style="left:18px;top:355px;font-size:11px;color:#0000b8">2</span>
<span class="t" style="left:18px;top:505px;font-size:11px;color:#00ff00">1</span>
<span class="t" style="left:18px;top:655px;font-size:11px;color:#ffd700">0</span>
<span class="t mono" id="htxt" style="left:454px;top:84px;font-size:12px;letter-spacing:.800px;white-space:pre">3635.280 s  &#916;t: 0 ms</span>
<!-- legend -->
<div id="legend" style="left:762px;top:78px;width:300px;height:116px;border:1px solid #484848;background:#f1f5fb"></div>
<div style="left:764px;top:80px;width:296px;height:19px;background:linear-gradient(#bacbdd,#c9d9e9 50%,#d7e4f1)"></div>
<div style="left:765px;top:99px;width:294px;height:92px;background:#000"></div>
<pre class="mono" id="legtxt" style="position:absolute;margin:0;left:769px;top:104px;font-size:12px;letter-spacing:.8px;line-height:16px;color:#fff">Col Nr Name           Y-Res Y-Off
    0: Symbol No 1   100/div -2.0
    1: Symbol No 2   100/div -0.5
    2: Symbol No 3   100/div +1.0
X-Res: 20ms/div (20 samples/div)</pre>
<div style="left:769px;top:126px;width:25px;height:2px;background:#ffd700"></div>
<div style="left:769px;top:142px;width:25px;height:2px;background:#00ff00"></div>
<div style="left:769px;top:158px;width:25px;height:2px;background:#0000b8"></div>
<!-- scrollbar -->
<div id="scroll"></div><div id="gap"></div>
<svg style="left:8px;top:862px" width="1054" height="18" viewBox="8 862 1054 18"><path d="M17.800 867v7l-4 -3.500z" fill="#303030"/><path d="M1052 867v7l4 -3.500z" fill="#000"/>
<defs><linearGradient id="th" x1="0" x2="0" y1="0" y2="1"><stop offset="0" stop-color="#f4f4f4"/><stop offset=".45" stop-color="#e6e6e6"/><stop offset=".5" stop-color="#d6d6d6"/><stop offset="1" stop-color="#cdcdcd"/></linearGradient></defs>
<rect x="984.500" y="863.500" width="59" height="14" rx="2.500" fill="url(#th)" stroke="#8e8e8e"/>
<path d="M1010.500 867v6.500M1013.500 867v6.500M1016.500 867v6.500" stroke="#404040" stroke-width="1"/><path d="M1011.500 867v6.500M1014.500 867v6.500M1017.500 867v6.500" stroke="#fff" stroke-width="1"/></svg>
<!-- table -->
<div id="table"></div>
<div class="hc" style="left:9px;width:81px"></div><div class="hc" style="left:90px"></div><div class="hc" style="left:170px"></div><div class="hc" style="left:250px"></div><div class="hc" style="left:330px"></div><div class="hc" style="left:410px"></div><div class="hc" style="left:490px"></div><div class="hc" style="left:570px"></div><div class="hc" style="left:650px"></div><div class="hc" style="left:730px"></div><div class="hc" style="left:810px"></div><div class="hc" style="left:890px;width:171px;border-right:none"></div>
<div class="vl" style="left:89px"></div><div class="vl" style="left:169px"></div><div class="vl" style="left:249px"></div><div class="vl" style="left:329px"></div><div class="vl" style="left:409px"></div><div class="vl" style="left:489px"></div><div class="vl" style="left:569px"></div><div class="vl" style="left:649px"></div><div class="vl" style="left:729px"></div><div class="vl" style="left:809px"></div><div class="vl" style="left:889px"></div>
<div class="hl" style="top:928px"></div><div class="hl" style="top:947px"></div><div class="hl" style="top:965px"></div>
<span class="t" style="top:890px;left:15.82px;transform:scaleX(1.0171);">Name</span>
<span class="t r" style="top:890px;right:906.23px;transform:scaleX(0.9320);">Address</span>
<span class="t" style="top:890px;left:176.20px;transform:scaleX(0.9254);">Size</span>
<span class="t" style="top:890px;left:256.58px;transform:scaleX(1.0501);">Type</span>
<span class="t r" style="top:890px;right:665.94px;transform:scaleX(0.9636);">Value</span>
<span class="t" style="top:890px;left:416.09px;transform:scaleX(1.0093);">Color</span>
<span class="t r" style="top:890px;right:505.94px;transform:scaleX(1.0751);">Min</span>
<span class="t r" style="top:890px;right:426.40px;transform:scaleX(0.9398);">Max</span>
<span class="t" style="top:890px;left:656.89px;transform:scaleX(1.0569);">Moving Av...</span>
<span class="t" style="top:890px;left:738.51px;transform:scaleX(0.9652);">Y Resolution</span>
<span class="t r" style="top:890px;right:186.43px;transform:scaleX(0.9450);">Y Offset</span>
<svg style="left:14px;top:912px" width="16" height="13" viewBox="0 0 16 13"><path d="M0.300 6.800l2.400 -2.400l3.100 3.100l7 -7.200l2.600 2.500l-9.600 9.800z" fill="#000"/></svg>
<span class="t" style="top:912px;left:32.27px;transform:scaleX(0.9803);">Symbol ...</span>
<span class="t r" style="top:912px;right:906.77px;transform:scaleX(0.8817);">0x00000000</span>
<span class="t" style="top:912px;left:176.43px;transform:scaleX(0.9109);">4 Bytes</span>
<span class="t" style="top:912px;left:256.51px;transform:scaleX(0.9503);">4 Byte sign...</span>
<span class="t r" style="top:912px;right:666.45px;transform:scaleX(0.8887);">24.00</span>
<span class="t" style="top:912px;left:416.65px;transform:scaleX(0.8718);">#FFD700</span>
<span class="t r" style="top:912px;right:506.45px;transform:scaleX(0.9027);">-100.00</span>
<span class="t r" style="top:912px;right:426.28px;transform:scaleX(0.9055);">100.00</span>
<span class="t r" style="top:912px;right:346.22px;transform:scaleX(0.9094);">-0.19</span>
<span class="t r" style="top:912px;right:266.84px;transform:scaleX(1.0069);">100/div</span>
<span class="t r" style="top:912px;right:186.22px;transform:scaleX(0.9225);">-2.0</span>
<svg style="left:14px;top:931px" width="16" height="13" viewBox="0 0 16 13"><path d="M0.300 6.800l2.400 -2.400l3.100 3.100l7 -7.200l2.600 2.500l-9.600 9.800z" fill="#000"/></svg>
<span class="t" style="top:931px;left:32.27px;transform:scaleX(0.9803);">Symbol ...</span>
<span class="t r" style="top:931px;right:906.77px;transform:scaleX(0.8817);">0x00000000</span>
<span class="t" style="top:931px;left:176.43px;transform:scaleX(0.9109);">4 Bytes</span>
<span class="t" style="top:931px;left:256.51px;transform:scaleX(0.9503);">4 Byte sign...</span>
<span class="t r" style="top:931px;right:666.45px;transform:scaleX(0.9102);">-100.00</span>
<span class="t" style="top:931px;left:416.65px;transform:scaleX(0.8723);">#00FF00</span>
<span class="t r" style="top:931px;right:506.45px;transform:scaleX(0.9027);">-100.00</span>
<span class="t r" style="top:931px;right:426.28px;transform:scaleX(0.9055);">100.00</span>
<span class="t r" style="top:931px;right:346.20px;transform:scaleX(0.9050);">0.19</span>
<span class="t r" style="top:931px;right:266.84px;transform:scaleX(1.0069);">100/div</span>
<span class="t r" style="top:931px;right:186.22px;transform:scaleX(0.9225);">-0.5</span>
<svg style="left:14px;top:950px" width="16" height="13" viewBox="0 0 16 13"><path d="M0.300 6.800l2.400 -2.400l3.100 3.100l7 -7.200l2.600 2.500l-9.600 9.800z" fill="#000"/></svg>
<span class="t" style="top:950px;left:32.27px;transform:scaleX(0.9803);">Symbol ...</span>
<span class="t r" style="top:950px;right:906.77px;transform:scaleX(0.8817);">0x00000000</span>
<span class="t" style="top:950px;left:176.43px;transform:scaleX(0.9109);">4 Bytes</span>
<span class="t" style="top:950px;left:256.51px;transform:scaleX(0.9503);">4 Byte sign...</span>
<span class="t r" style="top:950px;right:666.44px;transform:scaleX(0.8980);">15.00</span>
<span class="t" style="top:950px;left:416.65px;transform:scaleX(0.8859);">#0000B0</span>
<span class="t r" style="top:950px;right:506.45px;transform:scaleX(0.9027);">-100.00</span>
<span class="t r" style="top:950px;right:426.28px;transform:scaleX(0.9055);">100.00</span>
<span class="t r" style="top:950px;right:346.20px;transform:scaleX(0.9050);">0.83</span>
<span class="t r" style="top:950px;right:266.84px;transform:scaleX(1.0069);">100/div</span>
<span class="t r" style="top:950px;right:186.26px;transform:scaleX(0.9416);">+1.0</span>
<!-- status -->
<div id="status"></div>
<div style="left:633px;top:1042px;width:1px;height:18px;background:#d8d4d3"></div><div style="left:634px;top:1042px;width:1px;height:18px;background:#fff"></div>
<div style="left:793px;top:1042px;width:1px;height:18px;background:#d8d4d3"></div><div style="left:794px;top:1042px;width:1px;height:18px;background:#fff"></div>
<svg style="left:1048px;top:1048px" width="13" height="13" viewBox="0 0 13 13"><g fill="#fff"><rect x="10" y="4" width="1" height="1"/><rect x="7" y="7" width="1" height="1"/><rect x="10" y="7" width="1" height="1"/><rect x="4" y="10" width="1" height="1"/><rect x="7" y="10" width="1" height="1"/><rect x="10" y="10" width="1" height="1"/></g><g fill="#a9a5a4"><rect x="11" y="5" width="1.300" height="1.300"/><rect x="8" y="8" width="1.300" height="1.300"/><rect x="11" y="8" width="1.300" height="1.300"/><rect x="5" y="11" width="1.300" height="1.300"/><rect x="8" y="11" width="1.300" height="1.300"/><rect x="11" y="11" width="1.300" height="1.300"/></g></svg>
<span class="t" style="top:12px;left:30.23px;transform:scaleX(0.8780);">SEGGER J-Scope V5.10d</span>
<span class="t" style="top:33px;left:14.58px;transform:scaleX(0.9596);"><u>F</u>ile</span>
<span class="t" style="top:33px;left:46.62px;transform:scaleX(1.0164);"><u>H</u>elp</span>
<span class="t" style="top:55px;left:73.85px;transform:scaleX(1.0093);">Sampling:</span>
<span class="t" style="top:55px;left:276.20px;transform:scaleX(1.0081);">Trigger:</span>
<span class="t" style="top:55px;left:408.60px;transform:scaleX(1.0034);">Target:</span>
<span class="t" style="top:83px;color:#4c5a6c;left:764.96px;transform:scaleX(0.9744);">Legend</span>
<span class="t" style="top:1045px;left:638.08px;transform:scaleX(0.9575);">Off (RTT): 0 Samples/s</span>
<span class="t" style="top:1045px;left:798.00px;transform:scaleX(0.9391);">Buffer 16.00 MiB (1048576 samples), 6.25 %</span>
</body></html>
